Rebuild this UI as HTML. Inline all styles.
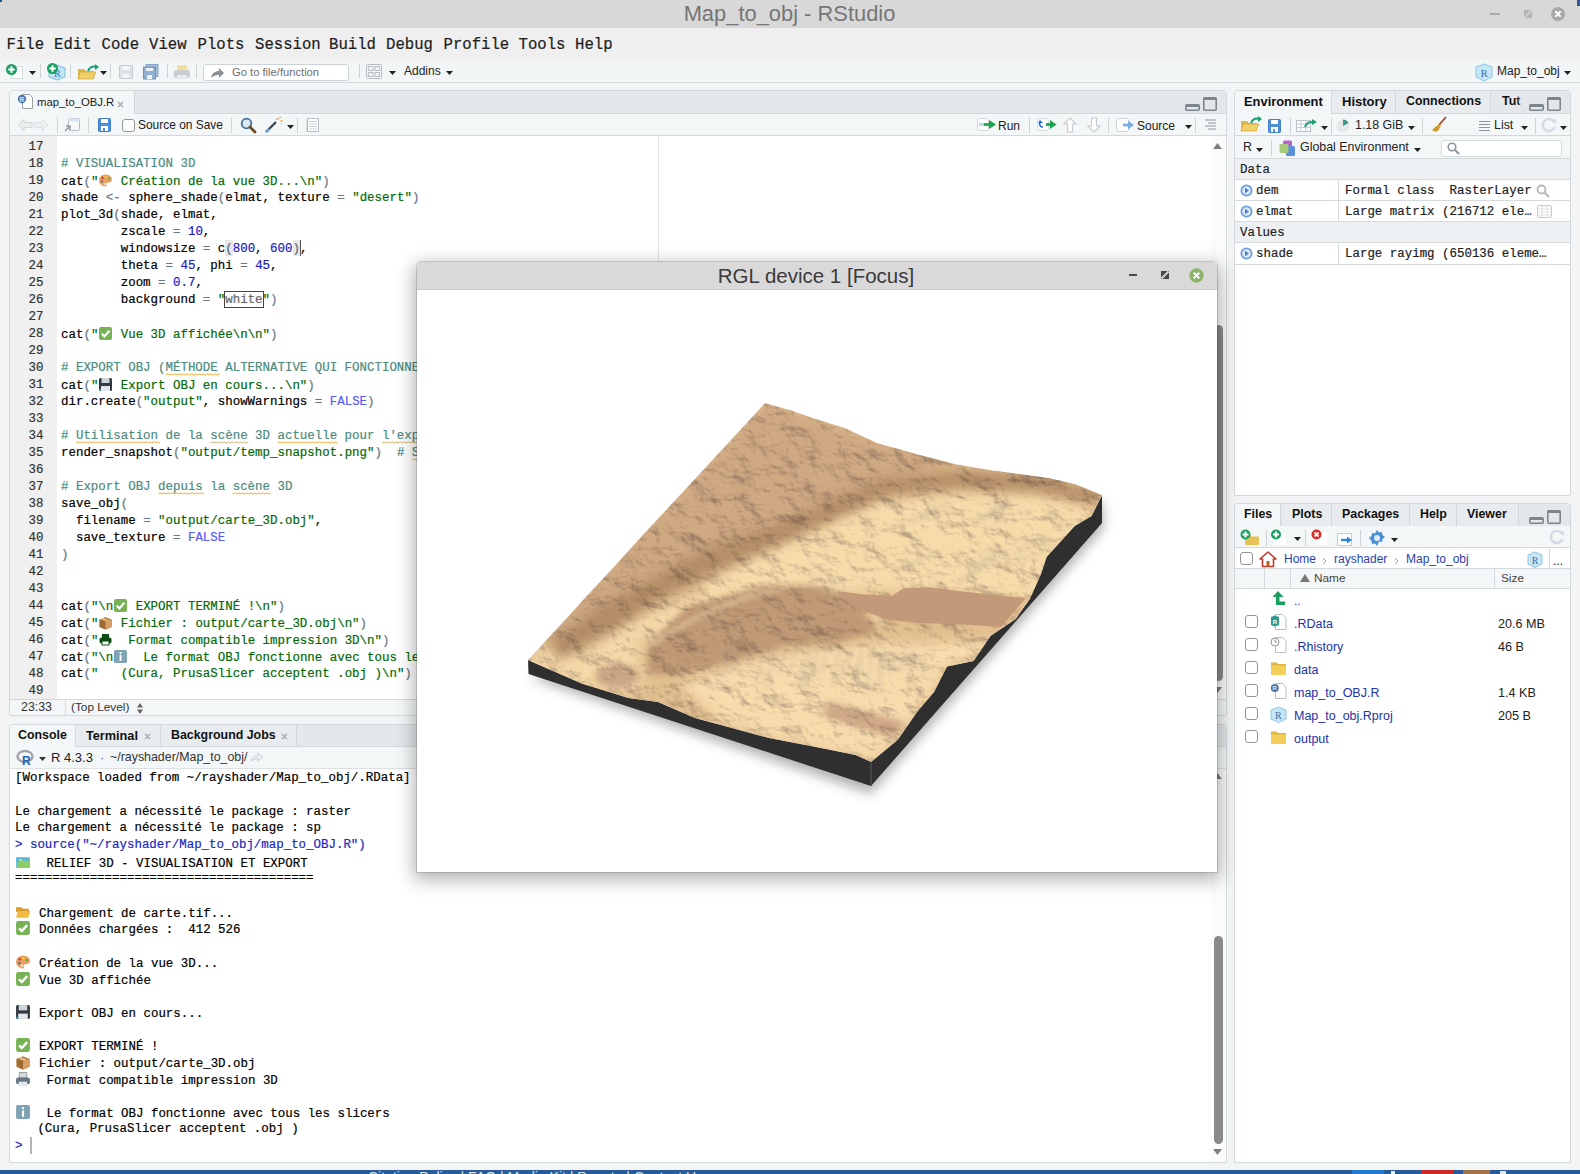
<!DOCTYPE html>
<html><head><meta charset="utf-8">
<style>
*{box-sizing:border-box;margin:0;padding:0}
html,body{width:1580px;height:1174px;overflow:hidden;background:#f2f4f5;font-family:"Liberation Sans",sans-serif;color:#222;position:relative}
.a{position:absolute}
.m{-webkit-text-stroke:0.2px currentColor}
svg.a{overflow:visible}
</style></head><body>
<div class="a" style="left:0px;top:0px;width:1580px;height:28px;background:#d8d8d8;"></div>
<div class="a" style="left:789.5px;top:-1.59px;font-size:21.9px;line-height:31px;font-family:'Liberation Sans',sans-serif;color:#767676;font-weight:normal;white-space:pre;transform:translateX(-50%);">Map_to_obj - RStudio</div>
<div class="a" style="left:1490px;top:13px;width:10px;height:2px;background:#a9a9a9;"></div>
<svg class="a" style="left:1524px;top:10px;" width="8" height="8" viewBox="0 0 8 8"><path d="M0 0h8v8H0z" fill="#b3b3b3"/><path d="M0.5 7.5L7.5 0.5" stroke="#d8d8d8" stroke-width="1.6"/></svg>
<svg class="a" style="left:1551px;top:7px;" width="14" height="14" viewBox="0 0 14 14"><circle cx="7" cy="7" r="7" fill="#a8a8a8"/><path d="M4.3 4.3L9.7 9.7M9.7 4.3L4.3 9.7" stroke="#fff" stroke-width="2"/></svg>
<div class="a" style="left:1577px;top:0px;width:3px;height:6px;background:#2a5a9b;"></div>
<div class="a" style="left:0px;top:0px;width:2px;height:2px;background:#1c4f96;"></div>
<div class="a" style="left:0px;top:28px;width:1580px;height:31px;background:#efefef;"></div>
<div class="a m" style="left:6.5px;top:33.83px;font-size:15.65px;line-height:22px;font-family:'Liberation Mono',monospace;color:#1e1e1e;font-weight:normal;white-space:pre;">File</div>
<div class="a m" style="left:54px;top:33.83px;font-size:15.65px;line-height:22px;font-family:'Liberation Mono',monospace;color:#1e1e1e;font-weight:normal;white-space:pre;">Edit</div>
<div class="a m" style="left:101.5px;top:33.83px;font-size:15.65px;line-height:22px;font-family:'Liberation Mono',monospace;color:#1e1e1e;font-weight:normal;white-space:pre;">Code</div>
<div class="a m" style="left:149px;top:33.83px;font-size:15.65px;line-height:22px;font-family:'Liberation Mono',monospace;color:#1e1e1e;font-weight:normal;white-space:pre;">View</div>
<div class="a m" style="left:197.5px;top:33.83px;font-size:15.65px;line-height:22px;font-family:'Liberation Mono',monospace;color:#1e1e1e;font-weight:normal;white-space:pre;">Plots</div>
<div class="a m" style="left:255px;top:33.83px;font-size:15.65px;line-height:22px;font-family:'Liberation Mono',monospace;color:#1e1e1e;font-weight:normal;white-space:pre;">Session</div>
<div class="a m" style="left:329px;top:33.83px;font-size:15.65px;line-height:22px;font-family:'Liberation Mono',monospace;color:#1e1e1e;font-weight:normal;white-space:pre;">Build</div>
<div class="a m" style="left:386px;top:33.83px;font-size:15.65px;line-height:22px;font-family:'Liberation Mono',monospace;color:#1e1e1e;font-weight:normal;white-space:pre;">Debug</div>
<div class="a m" style="left:443.5px;top:33.83px;font-size:15.65px;line-height:22px;font-family:'Liberation Mono',monospace;color:#1e1e1e;font-weight:normal;white-space:pre;">Profile</div>
<div class="a m" style="left:518.5px;top:33.83px;font-size:15.65px;line-height:22px;font-family:'Liberation Mono',monospace;color:#1e1e1e;font-weight:normal;white-space:pre;">Tools</div>
<div class="a m" style="left:575px;top:33.83px;font-size:15.65px;line-height:22px;font-family:'Liberation Mono',monospace;color:#1e1e1e;font-weight:normal;white-space:pre;">Help</div>
<div class="a" style="left:0px;top:59px;width:1580px;height:24px;background:#f3f6f7;border-bottom:1px solid #d3d8db"></div>
<div class="a" style="left:11px;top:66px;width:12px;height:13px;background:#fff;border:1px solid #d8dcdf"></div>
<svg class="a" style="left:6.0px;top:63.5px;" width="11.0" height="11.0" viewBox="0 0 11.0 11.0"><circle cx="5.5" cy="5.5" r="5.5" fill="#1aa060"/><path d="M5.5 2.2V8.8M2.2 5.5H8.8" stroke="#fff" stroke-width="2"/></svg>
<svg class="a" style="left:29px;top:71px;" width="7" height="4" viewBox="0 0 7 4"><path d="M0 0h7l-3.5 4z" fill="#222"/></svg>
<div class="a" style="left:40px;top:64px;width:1px;height:14px;background:#cfd4d7;"></div>
<svg class="a" style="left:47px;top:62px;" width="20" height="20" viewBox="0 0 20 20"><path d="M10 3l8 3v9l-8 3l-8-3V6z" fill="#bfe3f3" stroke="#7cc0df" stroke-width="1"/><text x="7" y="15" font-family="Liberation Serif" font-size="10" fill="#3a78b8">R</text></svg>
<svg class="a" style="left:46.5px;top:62.5px;" width="11.0" height="11.0" viewBox="0 0 11.0 11.0"><circle cx="5.5" cy="5.5" r="5.5" fill="#1aa060"/><path d="M5.5 2.2V8.8M2.2 5.5H8.8" stroke="#fff" stroke-width="2"/></svg>
<div class="a" style="left:70px;top:64px;width:1px;height:14px;background:#cfd4d7;"></div>
<svg class="a" style="left:77px;top:64px;" width="22" height="16" viewBox="0 0 22 16"><path d="M1 5h6l2 2h8v8H1z" fill="#e0b850"/><path d="M3 8h16l-3 7H1z" fill="#f1cf6a" stroke="#c99a2c" stroke-width=".6"/><path d="M11 7c2-4 5-5 8-4" stroke="#1aa070" stroke-width="2" fill="none"/><path d="M18 0l4 3l-4 3z" fill="#1aa070"/></svg>
<svg class="a" style="left:100px;top:71px;" width="7" height="4" viewBox="0 0 7 4"><path d="M0 0h7l-3.5 4z" fill="#222"/></svg>
<div class="a" style="left:110px;top:64px;width:1px;height:14px;background:#cfd4d7;"></div>
<svg class="a" style="left:119px;top:65px;" width="14" height="14" viewBox="0 0 14 14"><rect x="0.5" y="0.5" width="13" height="13" rx="1" fill="#dfe3e6" stroke="#c5cbd0"/><rect x="3" y="1" width="8" height="4" fill="#f3f6f7"/><rect x="4" y="9" width="6" height="4" fill="#f3f6f7"/></svg>
<svg class="a" style="left:143px;top:64px;" width="16" height="16" viewBox="0 0 16 16"><rect x="3" y="0.5" width="12" height="12" fill="#a7bfd8" stroke="#8aa6c6"/><rect x="0.5" y="3" width="12" height="12" fill="#8fb0d3" stroke="#6f93bd"/><rect x="3" y="4" width="7" height="3" fill="#eef3f8"/><rect x="4" y="11" width="5" height="4" fill="#eef3f8"/></svg>
<div class="a" style="left:167px;top:64px;width:1px;height:14px;background:#cfd4d7;"></div>
<svg class="a" style="left:173px;top:64px;" width="18" height="16" viewBox="0 0 18 16"><rect x="4" y="1" width="10" height="6" fill="#f0dfa0"/><rect x="1" y="6" width="16" height="8" rx="2" fill="#c9ced2"/><rect x="4" y="11" width="10" height="4" fill="#e9ecee"/></svg>
<div class="a" style="left:196px;top:64px;width:1px;height:14px;background:#cfd4d7;"></div>
<div class="a" style="left:203px;top:64px;width:146px;height:17px;background:#fff;border:1px solid #cdd2d6;border-radius:3px"></div>
<svg class="a" style="left:210px;top:66px;" width="14" height="13" viewBox="0 0 14 13"><path d="M1 12c1-5 4-7 8-7V2l5 5l-5 5V9c-3 0-6 1-8 3z" fill="#8c9196"/></svg>
<div class="a" style="left:232px;top:64.12px;font-size:11.2px;line-height:16px;font-family:'Liberation Sans',sans-serif;color:#6e6e6e;font-weight:normal;white-space:pre;">Go to file/function</div>
<div class="a" style="left:359px;top:64px;width:1px;height:14px;background:#cfd4d7;"></div>
<svg class="a" style="left:366px;top:64px;" width="16" height="15" viewBox="0 0 16 15"><rect x="0.5" y="0.5" width="15" height="14" rx="1" fill="none" stroke="#b8bdc1"/><rect x="2.5" y="2.5" width="4.5" height="4" fill="none" stroke="#b8bdc1"/><rect x="9" y="2.5" width="4.5" height="4" fill="none" stroke="#b8bdc1"/><rect x="2.5" y="8.5" width="4.5" height="4" fill="none" stroke="#b8bdc1"/><rect x="9" y="8.5" width="4.5" height="4" fill="none" stroke="#b8bdc1"/></svg>
<svg class="a" style="left:389px;top:71px;" width="7" height="4" viewBox="0 0 7 4"><path d="M0 0h7l-3.5 4z" fill="#222"/></svg>
<div class="a" style="left:404px;top:63.34px;font-size:12px;line-height:17px;font-family:'Liberation Sans',sans-serif;color:#222;font-weight:normal;white-space:pre;">Addins</div>
<svg class="a" style="left:446px;top:71px;" width="7" height="4" viewBox="0 0 7 4"><path d="M0 0h7l-3.5 4z" fill="#222"/></svg>
<svg class="a" style="left:1475px;top:63px;" width="18" height="19" viewBox="0 0 18 19"><path d="M9 1l8 3v10l-8 4l-8-4V4z" fill="#c6e6f5" stroke="#8ac8e6" stroke-width="1"/><text x="5.5" y="14" font-family="Liberation Serif" font-size="11" fill="#3f6fa8">R</text></svg>
<div class="a" style="left:1497px;top:63.34px;font-size:12px;line-height:17px;font-family:'Liberation Sans',sans-serif;color:#222;font-weight:normal;white-space:pre;">Map_to_obj</div>
<svg class="a" style="left:1564px;top:71px;" width="7" height="4" viewBox="0 0 7 4"><path d="M0 0h7l-3.5 4z" fill="#222"/></svg>
<div class="a" style="left:9px;top:90px;width:1218px;height:626px;background:#fff;border:1px solid #d3d8db;border-radius:4px 4px 2px 2px"></div>
<div class="a" style="left:10px;top:91px;width:1216px;height:23px;background:#e5e8ea;border-radius:3px 3px 0 0;border-bottom:1px solid #d3d8db"></div>
<div class="a" style="left:10px;top:91px;width:125px;height:23px;background:#f4f7f8;border-right:1px solid #d3d8db;border-radius:3px 0 0 0"></div>
<svg class="a" style="left:17px;top:93px;" width="17" height="16" viewBox="0 0 17 16"><path d="M5.5 1.5h7l3 3v11h-10z" fill="#fff" stroke="#9aa0a4" stroke-width="1"/><circle cx="5" cy="6" r="4.2" fill="#4d79b0"/><text x="2.6" y="8.7" font-family="Liberation Sans" font-size="6.5" font-weight="bold" fill="#dce6f2">R</text></svg>
<div class="a" style="left:37px;top:94.08px;font-size:11.3px;line-height:16px;font-family:'Liberation Sans',sans-serif;color:#1a1a1a;font-weight:normal;white-space:pre;">map_to_OBJ.R</div>
<svg class="a" style="left:117px;top:101px;" width="7" height="7" viewBox="0 0 7 7"><path d="M1 1l5 5M6 1l-5 5" stroke="#aab0b4" stroke-width="1.6"/></svg>
<svg class="a" style="left:1185px;top:97px;" width="32" height="14" viewBox="0 0 32 14"><rect x="0.8" y="7.8" width="13.4" height="5.4" rx="1" fill="none" stroke="#7d868c" stroke-width="1.6"/><rect x="0.8" y="8" width="13.4" height="2" fill="#7d868c"/><rect x="18.8" y="0.8" width="12.4" height="12.4" rx="1" fill="none" stroke="#7d868c" stroke-width="1.6"/><rect x="18.8" y="0.8" width="12.4" height="2.2" fill="#7d868c"/></svg>
<div class="a" style="left:10px;top:114px;width:1216px;height:22px;background:#f4f7f8;border-bottom:1px solid #d3d8db"></div>
<svg class="a" style="left:17px;top:118px;" width="32" height="14" viewBox="0 0 32 14"><path d="M1 7l6-6v3.5h8v5H7V13z" fill="#eceef0" stroke="#d3d7da" stroke-width="1"/><path d="M31 7l-6-6v3.5h-8v5h8V13z" fill="#eceef0" stroke="#dfe2e4" stroke-width="1"/></svg>
<div class="a" style="left:57px;top:117px;width:1px;height:16px;background:#cfd4d7;"></div>
<svg class="a" style="left:64px;top:118px;" width="17" height="14" viewBox="0 0 17 14"><rect x="4.5" y="0.5" width="11" height="12" rx="2" fill="#f7f9fa" stroke="#b5bcc1"/><rect x="4.5" y="0.5" width="11" height="3" fill="#d7e6f4"/><path d="M1 13l5-5M2 8h4v4" stroke="#8d959b" stroke-width="1.4" fill="none"/></svg>
<div class="a" style="left:88px;top:117px;width:1px;height:16px;background:#cfd4d7;"></div>
<svg class="a" style="left:98px;top:118px;" width="13" height="14" viewBox="0 0 13 14"><rect x="0.5" y="0.5" width="12" height="13" rx="1" fill="#4d8fd8" stroke="#3f7fc8"/><rect x="3" y="1" width="7" height="4" fill="#fff"/><rect x="3" y="8" width="7" height="5" fill="#fff"/><rect x="5" y="10" width="2" height="3" fill="#4d8fd8"/></svg>
<div class="a" style="left:122px;top:119px;width:13px;height:13px;background:#fff;border:1px solid #8f959a;border-radius:3px"></div>
<div class="a" style="left:138px;top:117.36px;font-size:11.95px;line-height:17px;font-family:'Liberation Sans',sans-serif;color:#1a1a1a;font-weight:normal;white-space:pre;">Source on Save</div>
<div class="a" style="left:231px;top:117px;width:1px;height:16px;background:#cfd4d7;"></div>
<svg class="a" style="left:240px;top:117px;" width="17" height="17" viewBox="0 0 17 17"><circle cx="6.5" cy="6.5" r="4.8" fill="#dbe9f6" stroke="#4b6f96" stroke-width="1.8"/><path d="M10 10l5 5" stroke="#6b4a2a" stroke-width="2.8" stroke-linecap="round"/></svg>
<svg class="a" style="left:264px;top:116px;" width="19" height="18" viewBox="0 0 19 18"><path d="M2 16L12 6" stroke="#3a4a5a" stroke-width="2.4"/><path d="M2 16l3-3" stroke="#6aa0d8" stroke-width="2.4"/><path d="M14 1v3M16 5h3M15.5 2.5l2-2M12 3l1 1M17 7l1 1" stroke="#f39a3a" stroke-width="1"/></svg>
<svg class="a" style="left:287px;top:125px;" width="7" height="4" viewBox="0 0 7 4"><path d="M0 0h7l-3.5 4z" fill="#222"/></svg>
<div class="a" style="left:297px;top:117px;width:1px;height:16px;background:#cfd4d7;"></div>
<svg class="a" style="left:306px;top:118px;" width="13" height="14" viewBox="0 0 13 14"><rect x="1.5" y="0.5" width="11" height="13" fill="#fff" stroke="#b9bfc4"/><path d="M3 3.5h8M3 6h8M3 8.5h8M3 11h8" stroke="#c9cfd3" stroke-width="1"/><path d="M1 2v11" stroke="#9aa1a6" stroke-dasharray="1 1"/></svg>
<svg class="a" style="left:977px;top:118px;" width="20" height="14" viewBox="0 0 20 14"><rect x="0.5" y="0.5" width="11" height="12" rx="2" fill="#fff" stroke="#d5d9dc"/><rect x="2" y="5" width="6" height="3" fill="#bcd3ef"/><path d="M7 6.5h6" stroke="#16a34a" stroke-width="2.6"/><path d="M12 2l7 4.5l-7 4.5z" fill="#16a34a"/></svg>
<div class="a" style="left:998px;top:117.84px;font-size:12px;line-height:17px;font-family:'Liberation Sans',sans-serif;color:#1a1a1a;font-weight:normal;white-space:pre;">Run</div>
<div class="a" style="left:1029px;top:117px;width:1px;height:16px;background:#cfd4d7;"></div>
<svg class="a" style="left:1037px;top:118px;" width="20" height="14" viewBox="0 0 20 14"><rect x="0.5" y="0.5" width="11" height="12" rx="2" fill="#fff" stroke="#d5d9dc"/><path d="M6 9c-3 0-4-2-3-5" stroke="#2563eb" stroke-width="1.6" fill="none"/><path d="M1 5l2-3l3 3z" fill="#2563eb"/><path d="M9 6.5h5" stroke="#16a34a" stroke-width="2.6"/><path d="M13 2l6.5 4.5l-6.5 4.5z" fill="#16a34a"/></svg>
<svg class="a" style="left:1063px;top:117px;" width="14" height="16" viewBox="0 0 14 16"><path d="M7 1l6 6H9.5v8h-5V7H1z" fill="#fff" stroke="#c8ccd0" stroke-width="1.2"/></svg>
<svg class="a" style="left:1087px;top:117px;" width="14" height="16" viewBox="0 0 14 16"><path d="M7 15l6-6H9.5V1h-5v8H1z" fill="#fff" stroke="#c8ccd0" stroke-width="1.2"/></svg>
<div class="a" style="left:1108px;top:117px;width:1px;height:16px;background:#cfd4d7;"></div>
<svg class="a" style="left:1116px;top:118px;" width="20" height="14" viewBox="0 0 20 14"><rect x="0.5" y="0.5" width="12" height="13" rx="2" fill="#fff" stroke="#cdd2d6"/><path d="M7 7h6" stroke="#7aaee0" stroke-width="2.8"/><path d="M12 2.5l6 4.5l-6 4.5z" fill="#7aaee0"/></svg>
<div class="a" style="left:1137px;top:117.84px;font-size:12px;line-height:17px;font-family:'Liberation Sans',sans-serif;color:#1a1a1a;font-weight:normal;white-space:pre;">Source</div>
<svg class="a" style="left:1185px;top:125px;" width="7" height="4" viewBox="0 0 7 4"><path d="M0 0h7l-3.5 4z" fill="#222"/></svg>
<div class="a" style="left:1195px;top:117px;width:1px;height:16px;background:#cfd4d7;"></div>
<svg class="a" style="left:1204px;top:119px;" width="13" height="12" viewBox="0 0 13 12"><path d="M1 1h11M4 4h8M1 7h11M4 10h8" stroke="#8d959b" stroke-width="1"/></svg>
<div class="a" style="left:10px;top:136px;width:47px;height:563px;background:#f0f0f0;"></div>
<div class="a" style="left:658px;top:136px;width:1px;height:563px;background:#e3e3e3;"></div>
<div class="a" style="left:1211px;top:136px;width:15px;height:563px;background:#fbfbfb;"></div>
<svg class="a" style="left:1213px;top:143px;" width="9" height="6" viewBox="0 0 9 6"><path d="M0 6h9L4.5 0z" fill="#7e7e7e"/></svg>
<div class="a" style="left:10px;top:699px;width:1216px;height:16px;background:#f4f7f8;border-top:1px solid #d3d8db;border-radius:0 0 2px 2px"></div>
<div class="a" style="left:65px;top:700px;width:1px;height:15px;background:#d3d8db;"></div>
<div class="a" style="left:21px;top:699.20px;font-size:12.4px;line-height:17px;font-family:'Liberation Sans',sans-serif;color:#333;font-weight:normal;white-space:pre;">23:33</div>
<div class="a" style="left:71px;top:699.41px;font-size:11.8px;line-height:17px;font-family:'Liberation Sans',sans-serif;color:#333;font-weight:normal;white-space:pre;">(Top Level)</div>
<svg class="a" style="left:137px;top:703px;" width="6" height="11" viewBox="0 0 6 11"><path d="M0 4.5h6L3 0zM0 6.5h6L3 11z" fill="#666"/></svg>
<div class="a m" style="left:43.5px;top:139.18px;font-size:12.45px;line-height:17px;font-family:'Liberation Mono',monospace;color:#333;font-weight:normal;white-space:pre;transform:translateX(-100%);">17</div>
<div class="a m" style="left:43.5px;top:156.18px;font-size:12.45px;line-height:17px;font-family:'Liberation Mono',monospace;color:#333;font-weight:normal;white-space:pre;transform:translateX(-100%);">18</div>
<div class="a m" style="left:61px;top:156.18px;font-size:12.45px;line-height:17px;font-family:'Liberation Mono',monospace;color:#000;font-weight:normal;white-space:pre;"><span style="color:#4c8b80"># VISUALISATION 3D</span></div>
<div class="a m" style="left:43.5px;top:173.18px;font-size:12.45px;line-height:17px;font-family:'Liberation Mono',monospace;color:#333;font-weight:normal;white-space:pre;transform:translateX(-100%);">19</div>
<div class="a m" style="left:61px;top:173.18px;font-size:12.45px;line-height:17px;font-family:'Liberation Mono',monospace;color:#000;font-weight:normal;white-space:pre;"><span style="color:#000">cat</span><span style="color:#687687">(</span><span style="color:#036a07">&quot;<span style="display:inline-block;width:14.94px"><svg width="15" height="15" viewBox="0 0 15 15" style="display:inline-block;vertical-align:-3px"><path d="M7.5 1.5C3.5 1.5 1 4.3 1 7.6c0 3.6 3 5.9 6.2 5.9c1.6 0 1.7-1.2 1.1-2c-.6-.9 0-2 1.2-1.9c2.2.2 4.5-.5 4.5-3.2C14 3.7 11 1.5 7.5 1.5z" fill="#e9a05b"/><circle cx="4.5" cy="5" r="1.2" fill="#d23b3b"/><circle cx="7.8" cy="3.9" r="1.1" fill="#f2d13c"/><circle cx="11" cy="5.6" r="1.1" fill="#5aa84a"/><circle cx="4" cy="8.6" r="1.1" fill="#3a6fc4"/><circle cx="6.5" cy="11" r="1.1" fill="#f6efe6"/></svg></span> Création de la vue 3D...\n&quot;</span><span style="color:#687687">)</span></div>
<div class="a m" style="left:43.5px;top:190.18px;font-size:12.45px;line-height:17px;font-family:'Liberation Mono',monospace;color:#333;font-weight:normal;white-space:pre;transform:translateX(-100%);">20</div>
<div class="a m" style="left:61px;top:190.18px;font-size:12.45px;line-height:17px;font-family:'Liberation Mono',monospace;color:#000;font-weight:normal;white-space:pre;"><span style="color:#000">shade</span><span style="color:#000"> </span><span style="color:#687687">&lt;-</span><span style="color:#000"> </span><span style="color:#000">sphere_shade</span><span style="color:#687687">(</span><span style="color:#000">elmat</span><span style="color:#000">,</span><span style="color:#000"> </span><span style="color:#000">texture</span><span style="color:#000"> </span><span style="color:#687687">=</span><span style="color:#000"> </span><span style="color:#036a07">&quot;desert&quot;</span><span style="color:#687687">)</span></div>
<div class="a m" style="left:43.5px;top:207.18px;font-size:12.45px;line-height:17px;font-family:'Liberation Mono',monospace;color:#333;font-weight:normal;white-space:pre;transform:translateX(-100%);">21</div>
<div class="a m" style="left:61px;top:207.18px;font-size:12.45px;line-height:17px;font-family:'Liberation Mono',monospace;color:#000;font-weight:normal;white-space:pre;"><span style="color:#000">plot_3d</span><span style="color:#687687">(</span><span style="color:#000">shade</span><span style="color:#000">,</span><span style="color:#000"> </span><span style="color:#000">elmat</span><span style="color:#000">,</span></div>
<div class="a m" style="left:43.5px;top:224.18px;font-size:12.45px;line-height:17px;font-family:'Liberation Mono',monospace;color:#333;font-weight:normal;white-space:pre;transform:translateX(-100%);">22</div>
<div class="a m" style="left:61px;top:224.18px;font-size:12.45px;line-height:17px;font-family:'Liberation Mono',monospace;color:#000;font-weight:normal;white-space:pre;"><span style="color:#000">        </span><span style="color:#000">zscale</span><span style="color:#000"> </span><span style="color:#687687">=</span><span style="color:#000"> </span><span style="color:#1c19c9">10</span><span style="color:#000">,</span></div>
<div class="a m" style="left:43.5px;top:241.18px;font-size:12.45px;line-height:17px;font-family:'Liberation Mono',monospace;color:#333;font-weight:normal;white-space:pre;transform:translateX(-100%);">23</div>
<div class="a m" style="left:61px;top:241.18px;font-size:12.45px;line-height:17px;font-family:'Liberation Mono',monospace;color:#000;font-weight:normal;white-space:pre;"><span style="color:#000">        </span><span style="color:#000">windowsize</span><span style="color:#000"> </span><span style="color:#687687">=</span><span style="color:#000"> </span><span style="color:#000">c</span><span style="color:#687687">(</span><span style="color:#1c19c9">800</span><span style="color:#000">,</span><span style="color:#000"> </span><span style="color:#1c19c9">600</span><span style="color:#687687">)</span><span style="color:#000">,</span></div>
<div class="a m" style="left:43.5px;top:258.18px;font-size:12.45px;line-height:17px;font-family:'Liberation Mono',monospace;color:#333;font-weight:normal;white-space:pre;transform:translateX(-100%);">24</div>
<div class="a m" style="left:61px;top:258.18px;font-size:12.45px;line-height:17px;font-family:'Liberation Mono',monospace;color:#000;font-weight:normal;white-space:pre;"><span style="color:#000">        </span><span style="color:#000">theta</span><span style="color:#000"> </span><span style="color:#687687">=</span><span style="color:#000"> </span><span style="color:#1c19c9">45</span><span style="color:#000">,</span><span style="color:#000"> </span><span style="color:#000">phi</span><span style="color:#000"> </span><span style="color:#687687">=</span><span style="color:#000"> </span><span style="color:#1c19c9">45</span><span style="color:#000">,</span></div>
<div class="a m" style="left:43.5px;top:275.18px;font-size:12.45px;line-height:17px;font-family:'Liberation Mono',monospace;color:#333;font-weight:normal;white-space:pre;transform:translateX(-100%);">25</div>
<div class="a m" style="left:61px;top:275.18px;font-size:12.45px;line-height:17px;font-family:'Liberation Mono',monospace;color:#000;font-weight:normal;white-space:pre;"><span style="color:#000">        </span><span style="color:#000">zoom</span><span style="color:#000"> </span><span style="color:#687687">=</span><span style="color:#000"> </span><span style="color:#1c19c9">0.7</span><span style="color:#000">,</span></div>
<div class="a m" style="left:43.5px;top:292.18px;font-size:12.45px;line-height:17px;font-family:'Liberation Mono',monospace;color:#333;font-weight:normal;white-space:pre;transform:translateX(-100%);">26</div>
<div class="a m" style="left:61px;top:292.18px;font-size:12.45px;line-height:17px;font-family:'Liberation Mono',monospace;color:#000;font-weight:normal;white-space:pre;"><span style="color:#000">        </span><span style="color:#000">background</span><span style="color:#000"> </span><span style="color:#687687">=</span><span style="color:#000"> </span><span style="color:#036a07">&quot;<span style="color:#666">white</span>&quot;</span><span style="color:#687687">)</span></div>
<div class="a m" style="left:43.5px;top:309.18px;font-size:12.45px;line-height:17px;font-family:'Liberation Mono',monospace;color:#333;font-weight:normal;white-space:pre;transform:translateX(-100%);">27</div>
<div class="a m" style="left:43.5px;top:326.18px;font-size:12.45px;line-height:17px;font-family:'Liberation Mono',monospace;color:#333;font-weight:normal;white-space:pre;transform:translateX(-100%);">28</div>
<div class="a m" style="left:61px;top:326.18px;font-size:12.45px;line-height:17px;font-family:'Liberation Mono',monospace;color:#000;font-weight:normal;white-space:pre;"><span style="color:#000">cat</span><span style="color:#687687">(</span><span style="color:#036a07">&quot;<span style="display:inline-block;width:14.94px"><svg width="15" height="15" viewBox="0 0 15 15" style="display:inline-block;vertical-align:-3px"><rect x="1" y="1" width="13" height="13" rx="2" fill="#77b255"/><path d="M3.8 7.8l2.6 2.6l5-5.6" stroke="#fff" stroke-width="2.2" fill="none"/></svg></span> Vue 3D affichée\n\n&quot;</span><span style="color:#687687">)</span></div>
<div class="a m" style="left:43.5px;top:343.18px;font-size:12.45px;line-height:17px;font-family:'Liberation Mono',monospace;color:#333;font-weight:normal;white-space:pre;transform:translateX(-100%);">29</div>
<div class="a m" style="left:43.5px;top:360.18px;font-size:12.45px;line-height:17px;font-family:'Liberation Mono',monospace;color:#333;font-weight:normal;white-space:pre;transform:translateX(-100%);">30</div>
<div class="a m" style="left:61px;top:360.18px;font-size:12.45px;line-height:17px;font-family:'Liberation Mono',monospace;color:#000;font-weight:normal;white-space:pre;"><span style="color:#4c8b80"># EXPORT OBJ (MÉTHODE ALTERNATIVE QUI FONCTIONNE)</span></div>
<div class="a m" style="left:43.5px;top:377.18px;font-size:12.45px;line-height:17px;font-family:'Liberation Mono',monospace;color:#333;font-weight:normal;white-space:pre;transform:translateX(-100%);">31</div>
<div class="a m" style="left:61px;top:377.18px;font-size:12.45px;line-height:17px;font-family:'Liberation Mono',monospace;color:#000;font-weight:normal;white-space:pre;"><span style="color:#000">cat</span><span style="color:#687687">(</span><span style="color:#036a07">&quot;<span style="display:inline-block;width:14.94px"><svg width="15" height="15" viewBox="0 0 15 15" style="display:inline-block;vertical-align:-3px"><rect x="1" y="1" width="13" height="13" rx="1.5" fill="#31373d"/><rect x="3.5" y="1" width="8" height="5" fill="#ccd6dd"/><rect x="3" y="9" width="9" height="5" fill="#e1e8ed"/><rect x="1" y="12" width="2" height="2" fill="#3b88c3"/></svg></span> Export OBJ en cours...\n&quot;</span><span style="color:#687687">)</span></div>
<div class="a m" style="left:43.5px;top:394.18px;font-size:12.45px;line-height:17px;font-family:'Liberation Mono',monospace;color:#333;font-weight:normal;white-space:pre;transform:translateX(-100%);">32</div>
<div class="a m" style="left:61px;top:394.18px;font-size:12.45px;line-height:17px;font-family:'Liberation Mono',monospace;color:#000;font-weight:normal;white-space:pre;"><span style="color:#000">dir.create</span><span style="color:#687687">(</span><span style="color:#036a07">&quot;output&quot;</span><span style="color:#000">,</span><span style="color:#000"> </span><span style="color:#000">showWarnings</span><span style="color:#000"> </span><span style="color:#687687">=</span><span style="color:#000"> </span><span style="color:#585cf6">FALSE</span><span style="color:#687687">)</span></div>
<div class="a m" style="left:43.5px;top:411.18px;font-size:12.45px;line-height:17px;font-family:'Liberation Mono',monospace;color:#333;font-weight:normal;white-space:pre;transform:translateX(-100%);">33</div>
<div class="a m" style="left:43.5px;top:428.18px;font-size:12.45px;line-height:17px;font-family:'Liberation Mono',monospace;color:#333;font-weight:normal;white-space:pre;transform:translateX(-100%);">34</div>
<div class="a m" style="left:61px;top:428.18px;font-size:12.45px;line-height:17px;font-family:'Liberation Mono',monospace;color:#000;font-weight:normal;white-space:pre;"><span style="color:#4c8b80"># Utilisation de la scène 3D actuelle pour l&#x27;export</span></div>
<div class="a m" style="left:43.5px;top:445.18px;font-size:12.45px;line-height:17px;font-family:'Liberation Mono',monospace;color:#333;font-weight:normal;white-space:pre;transform:translateX(-100%);">35</div>
<div class="a m" style="left:61px;top:445.18px;font-size:12.45px;line-height:17px;font-family:'Liberation Mono',monospace;color:#000;font-weight:normal;white-space:pre;"><span style="color:#000">render_snapshot</span><span style="color:#687687">(</span><span style="color:#036a07">&quot;output/temp_snapshot.png&quot;</span><span style="color:#687687">)</span><span style="color:#000">  </span><span style="color:#4c8b80"># Snapshot</span></div>
<div class="a m" style="left:43.5px;top:462.18px;font-size:12.45px;line-height:17px;font-family:'Liberation Mono',monospace;color:#333;font-weight:normal;white-space:pre;transform:translateX(-100%);">36</div>
<div class="a m" style="left:43.5px;top:479.18px;font-size:12.45px;line-height:17px;font-family:'Liberation Mono',monospace;color:#333;font-weight:normal;white-space:pre;transform:translateX(-100%);">37</div>
<div class="a m" style="left:61px;top:479.18px;font-size:12.45px;line-height:17px;font-family:'Liberation Mono',monospace;color:#000;font-weight:normal;white-space:pre;"><span style="color:#4c8b80"># Export OBJ depuis la scène 3D</span></div>
<div class="a m" style="left:43.5px;top:496.18px;font-size:12.45px;line-height:17px;font-family:'Liberation Mono',monospace;color:#333;font-weight:normal;white-space:pre;transform:translateX(-100%);">38</div>
<div class="a m" style="left:61px;top:496.18px;font-size:12.45px;line-height:17px;font-family:'Liberation Mono',monospace;color:#000;font-weight:normal;white-space:pre;"><span style="color:#000">save_obj</span><span style="color:#687687">(</span></div>
<div class="a m" style="left:43.5px;top:513.18px;font-size:12.45px;line-height:17px;font-family:'Liberation Mono',monospace;color:#333;font-weight:normal;white-space:pre;transform:translateX(-100%);">39</div>
<div class="a m" style="left:61px;top:513.18px;font-size:12.45px;line-height:17px;font-family:'Liberation Mono',monospace;color:#000;font-weight:normal;white-space:pre;"><span style="color:#000">  </span><span style="color:#000">filename</span><span style="color:#000"> </span><span style="color:#687687">=</span><span style="color:#000"> </span><span style="color:#036a07">&quot;output/carte_3D.obj&quot;</span><span style="color:#000">,</span></div>
<div class="a m" style="left:43.5px;top:530.18px;font-size:12.45px;line-height:17px;font-family:'Liberation Mono',monospace;color:#333;font-weight:normal;white-space:pre;transform:translateX(-100%);">40</div>
<div class="a m" style="left:61px;top:530.18px;font-size:12.45px;line-height:17px;font-family:'Liberation Mono',monospace;color:#000;font-weight:normal;white-space:pre;"><span style="color:#000">  </span><span style="color:#000">save_texture</span><span style="color:#000"> </span><span style="color:#687687">=</span><span style="color:#000"> </span><span style="color:#585cf6">FALSE</span></div>
<div class="a m" style="left:43.5px;top:547.18px;font-size:12.45px;line-height:17px;font-family:'Liberation Mono',monospace;color:#333;font-weight:normal;white-space:pre;transform:translateX(-100%);">41</div>
<div class="a m" style="left:61px;top:547.18px;font-size:12.45px;line-height:17px;font-family:'Liberation Mono',monospace;color:#000;font-weight:normal;white-space:pre;"><span style="color:#687687">)</span></div>
<div class="a m" style="left:43.5px;top:564.18px;font-size:12.45px;line-height:17px;font-family:'Liberation Mono',monospace;color:#333;font-weight:normal;white-space:pre;transform:translateX(-100%);">42</div>
<div class="a m" style="left:43.5px;top:581.18px;font-size:12.45px;line-height:17px;font-family:'Liberation Mono',monospace;color:#333;font-weight:normal;white-space:pre;transform:translateX(-100%);">43</div>
<div class="a m" style="left:43.5px;top:598.18px;font-size:12.45px;line-height:17px;font-family:'Liberation Mono',monospace;color:#333;font-weight:normal;white-space:pre;transform:translateX(-100%);">44</div>
<div class="a m" style="left:61px;top:598.18px;font-size:12.45px;line-height:17px;font-family:'Liberation Mono',monospace;color:#000;font-weight:normal;white-space:pre;"><span style="color:#000">cat</span><span style="color:#687687">(</span><span style="color:#036a07">&quot;\n<span style="display:inline-block;width:14.94px"><svg width="15" height="15" viewBox="0 0 15 15" style="display:inline-block;vertical-align:-3px"><rect x="1" y="1" width="13" height="13" rx="2" fill="#77b255"/><path d="M3.8 7.8l2.6 2.6l5-5.6" stroke="#fff" stroke-width="2.2" fill="none"/></svg></span> EXPORT TERMINÉ !\n&quot;</span><span style="color:#687687">)</span></div>
<div class="a m" style="left:43.5px;top:615.18px;font-size:12.45px;line-height:17px;font-family:'Liberation Mono',monospace;color:#333;font-weight:normal;white-space:pre;transform:translateX(-100%);">45</div>
<div class="a m" style="left:61px;top:615.18px;font-size:12.45px;line-height:17px;font-family:'Liberation Mono',monospace;color:#000;font-weight:normal;white-space:pre;"><span style="color:#000">cat</span><span style="color:#687687">(</span><span style="color:#036a07">&quot;<span style="display:inline-block;width:14.94px"><svg width="15" height="15" viewBox="0 0 15 15" style="display:inline-block;vertical-align:-3px"><path d="M1.5 4.5L7.5 2l6 2.5v7.5l-6 2.5l-6-2.5z" fill="#c1884a"/><path d="M1.5 4.5l6 2.5l6-2.5v7.5l-6 2.5l-6-2.5z" fill="#a06a35"/><path d="M7.5 7v7.5l6-2.5V4.5z" fill="#d9a066"/><path d="M4 3.4l6 2.6" stroke="#f0d0a0" stroke-width="1.2"/></svg></span> Fichier : output/carte_3D.obj\n&quot;</span><span style="color:#687687">)</span></div>
<div class="a m" style="left:43.5px;top:632.18px;font-size:12.45px;line-height:17px;font-family:'Liberation Mono',monospace;color:#333;font-weight:normal;white-space:pre;transform:translateX(-100%);">46</div>
<div class="a m" style="left:61px;top:632.18px;font-size:12.45px;line-height:17px;font-family:'Liberation Mono',monospace;color:#000;font-weight:normal;white-space:pre;"><span style="color:#000">cat</span><span style="color:#687687">(</span><span style="color:#036a07">&quot;<span style="display:inline-block;width:14.94px"><svg width="15" height="15" viewBox="0 0 15 15" style="display:inline-block;vertical-align:-3px"><rect x="4" y="2" width="7" height="4" fill="#0d4d14"/><rect x="1.5" y="5.5" width="12" height="6" rx="2" fill="#0d4d14"/><rect x="4" y="9" width="7" height="4" fill="#fff" stroke="#0d4d14"/></svg></span>  Format compatible impression 3D\n&quot;</span><span style="color:#687687">)</span></div>
<div class="a m" style="left:43.5px;top:649.18px;font-size:12.45px;line-height:17px;font-family:'Liberation Mono',monospace;color:#333;font-weight:normal;white-space:pre;transform:translateX(-100%);">47</div>
<div class="a m" style="left:61px;top:649.18px;font-size:12.45px;line-height:17px;font-family:'Liberation Mono',monospace;color:#000;font-weight:normal;white-space:pre;"><span style="color:#000">cat</span><span style="color:#687687">(</span><span style="color:#036a07">&quot;\n<span style="display:inline-block;width:14.94px"><svg width="15" height="15" viewBox="0 0 15 15" style="display:inline-block;vertical-align:-3px"><rect x="1" y="1" width="13" height="13" rx="1.5" fill="#7fa3b5"/><rect x="6.6" y="3" width="1.9" height="1.9" fill="#fff"/><rect x="6.6" y="6" width="1.9" height="6" fill="#fff"/></svg></span>  Le format OBJ fonctionne avec tous les slicers\n&quot;</span><span style="color:#687687">)</span></div>
<div class="a m" style="left:43.5px;top:666.18px;font-size:12.45px;line-height:17px;font-family:'Liberation Mono',monospace;color:#333;font-weight:normal;white-space:pre;transform:translateX(-100%);">48</div>
<div class="a m" style="left:61px;top:666.18px;font-size:12.45px;line-height:17px;font-family:'Liberation Mono',monospace;color:#000;font-weight:normal;white-space:pre;"><span style="color:#000">cat</span><span style="color:#687687">(</span><span style="color:#036a07">&quot;   (Cura, PrusaSlicer acceptent .obj )\n&quot;</span><span style="color:#687687">)</span></div>
<div class="a m" style="left:43.5px;top:683.18px;font-size:12.45px;line-height:17px;font-family:'Liberation Mono',monospace;color:#333;font-weight:normal;white-space:pre;transform:translateX(-100%);">49</div>
<div class="a" style="left:225.34px;top:240px;width:7.47px;height:16px;background:rgba(0,0,0,0.09);"></div>
<div class="a" style="left:292.57px;top:240px;width:7.47px;height:16px;background:rgba(0,0,0,0.09);"></div>
<div class="a" style="left:299.53999999999996px;top:240px;width:1.2px;height:16px;background:#555;"></div>
<div class="a" style="left:224.34px;top:291px;width:39.35px;height:17px;background:none;border:1px solid #444"></div>
<svg class="a" style="left:0;top:0" width="1" height="1"><path d="M165.6 375.0 L167.6 373.8 L169.6 375.0 L171.6 373.8 L173.6 375.0 L175.6 373.8 L177.6 375.0 L179.6 373.8 L181.6 375.0 L183.6 373.8 L185.6 375.0 L187.6 373.8 L189.6 375.0 L191.6 373.8 L193.6 375.0 L195.6 373.8 L197.6 375.0 L199.6 373.8 L201.6 375.0 L203.6 373.8 L205.6 375.0 L207.6 373.8 L209.6 375.0 L211.6 373.8 L213.6 375.0 L215.6 373.8 L217.6 375.0 L219.6 373.8" stroke="#e3a23a" stroke-width="0.9" fill="none"/></svg>
<svg class="a" style="left:0;top:0" width="1" height="1"><path d="M75.9 443.0 L77.9 441.8 L79.9 443.0 L81.9 441.8 L83.9 443.0 L85.9 441.8 L87.9 443.0 L89.9 441.8 L91.9 443.0 L93.9 441.8 L95.9 443.0 L97.9 441.8 L99.9 443.0 L101.9 441.8 L103.9 443.0 L105.9 441.8 L107.9 443.0 L109.9 441.8 L111.9 443.0 L113.9 441.8 L115.9 443.0 L117.9 441.8 L119.9 443.0 L121.9 441.8 L123.9 443.0 L125.9 441.8 L127.9 443.0 L129.9 441.8 L131.9 443.0 L133.9 441.8 L135.9 443.0 L137.9 441.8 L139.9 443.0 L141.9 441.8 L143.9 443.0 L145.9 441.8 L147.9 443.0 L149.9 441.8 L151.9 443.0 L153.9 441.8 L155.9 443.0 L157.9 441.8 L159.9 443.0" stroke="#e3a23a" stroke-width="0.9" fill="none"/></svg>
<svg class="a" style="left:0;top:0" width="1" height="1"><path d="M210.4 443.0 L212.4 441.8 L214.4 443.0 L216.4 441.8 L218.4 443.0 L220.4 441.8 L222.4 443.0 L224.4 441.8 L226.4 443.0 L228.4 441.8 L230.4 443.0 L232.4 441.8 L234.4 443.0 L236.4 441.8 L238.4 443.0 L240.4 441.8 L242.4 443.0 L244.4 441.8 L246.4 443.0 L248.4 441.8" stroke="#e3a23a" stroke-width="0.9" fill="none"/></svg>
<svg class="a" style="left:0;top:0" width="1" height="1"><path d="M277.6 443.0 L279.6 441.8 L281.6 443.0 L283.6 441.8 L285.6 443.0 L287.6 441.8 L289.6 443.0 L291.6 441.8 L293.6 443.0 L295.6 441.8 L297.6 443.0 L299.6 441.8 L301.6 443.0 L303.6 441.8 L305.6 443.0 L307.6 441.8 L309.6 443.0 L311.6 441.8 L313.6 443.0 L315.6 441.8 L317.6 443.0 L319.6 441.8 L321.6 443.0 L323.6 441.8 L325.6 443.0 L327.6 441.8 L329.6 443.0 L331.6 441.8 L333.6 443.0 L335.6 441.8 L337.6 443.0" stroke="#e3a23a" stroke-width="0.9" fill="none"/></svg>
<svg class="a" style="left:0;top:0" width="1" height="1"><path d="M382.2 443.0 L384.2 441.8 L386.2 443.0 L388.2 441.8 L390.2 443.0 L392.2 441.8 L394.2 443.0 L396.2 441.8 L398.2 443.0 L400.2 441.8 L402.2 443.0 L404.2 441.8 L406.2 443.0 L408.2 441.8 L410.2 443.0 L412.2 441.8 L414.2 443.0 L416.2 441.8 L418.2 443.0 L420.2 441.8 L422.2 443.0 L424.2 441.8 L426.2 443.0 L428.2 441.8 L430.2 443.0 L432.2 441.8 L434.2 443.0 L436.2 441.8 L438.2 443.0 L440.2 441.8 L442.2 443.0" stroke="#e3a23a" stroke-width="0.9" fill="none"/></svg>
<svg class="a" style="left:0;top:0" width="1" height="1"><path d="M412.1 460.0 L414.1 458.8 L416.1 460.0 L418.1 458.8 L420.1 460.0" stroke="#e3a23a" stroke-width="0.9" fill="none"/></svg>
<svg class="a" style="left:0;top:0" width="1" height="1"><path d="M158.1 494.0 L160.1 492.8 L162.1 494.0 L164.1 492.8 L166.1 494.0 L168.1 492.8 L170.1 494.0 L172.1 492.8 L174.1 494.0 L176.1 492.8 L178.1 494.0 L180.1 492.8 L182.1 494.0 L184.1 492.8 L186.1 494.0 L188.1 492.8 L190.1 494.0 L192.1 492.8 L194.1 494.0 L196.1 492.8 L198.1 494.0 L200.1 492.8 L202.1 494.0 L204.1 492.8" stroke="#e3a23a" stroke-width="0.9" fill="none"/></svg>
<svg class="a" style="left:0;top:0" width="1" height="1"><path d="M232.8 494.0 L234.8 492.8 L236.8 494.0 L238.8 492.8 L240.8 494.0 L242.8 492.8 L244.8 494.0 L246.8 492.8 L248.8 494.0 L250.8 492.8 L252.8 494.0 L254.8 492.8 L256.8 494.0 L258.8 492.8 L260.8 494.0 L262.8 492.8 L264.8 494.0 L266.8 492.8 L268.8 494.0 L270.8 492.8" stroke="#e3a23a" stroke-width="0.9" fill="none"/></svg>
<div class="a" style="left:9px;top:724px;width:1218px;height:439px;background:#fff;border:1px solid #d3d8db;border-radius:4px 4px 2px 2px"></div>
<div class="a" style="left:10px;top:725px;width:1216px;height:22px;background:#e5e8ea;border-radius:3px 3px 0 0;border-bottom:1px solid #d3d8db"></div>
<div class="a" style="left:10px;top:725px;width:66px;height:22px;background:#f4f7f8;border-right:1px solid #d3d8db;border-radius:3px 0 0 0"></div>
<div class="a" style="left:76px;top:725px;width:85px;height:21px;background:#e9ecee;border-right:1px solid #d3d8db"></div>
<div class="a" style="left:161px;top:725px;width:136px;height:21px;background:#e9ecee;border-right:1px solid #d3d8db"></div>
<div class="a" style="left:18px;top:727.20px;font-size:12.4px;line-height:17px;font-family:'Liberation Sans',sans-serif;color:#111;font-weight:bold;white-space:pre;">Console</div>
<div class="a" style="left:86px;top:726.60px;font-size:12.7px;line-height:18px;font-family:'Liberation Sans',sans-serif;color:#111;font-weight:bold;white-space:pre;">Terminal</div>
<svg class="a" style="left:144px;top:733px;" width="7" height="7" viewBox="0 0 7 7"><path d="M1 1l5 5M6 1l-5 5" stroke="#aab0b4" stroke-width="1.6"/></svg>
<div class="a" style="left:171px;top:727.20px;font-size:12.4px;line-height:17px;font-family:'Liberation Sans',sans-serif;color:#111;font-weight:bold;white-space:pre;">Background Jobs</div>
<svg class="a" style="left:281px;top:733px;" width="7" height="7" viewBox="0 0 7 7"><path d="M1 1l5 5M6 1l-5 5" stroke="#aab0b4" stroke-width="1.6"/></svg>
<div class="a" style="left:10px;top:747px;width:1216px;height:22px;background:#f4f7f8;border-bottom:1px solid #dde1e4"></div>
<svg class="a" style="left:17px;top:750px;" width="17" height="15" viewBox="0 0 17 15"><ellipse cx="8" cy="6.5" rx="7.5" ry="5.5" fill="none" stroke="#a0a4a8" stroke-width="2.4"/><text x="5" y="14.5" font-family="Liberation Sans" font-size="12" font-weight="bold" fill="#2165b8">R</text></svg>
<svg class="a" style="left:39px;top:757px;" width="7" height="4" viewBox="0 0 7 4"><path d="M0 0h7l-3.5 4z" fill="#333"/></svg>
<div class="a" style="left:51px;top:748.50px;font-size:13px;line-height:18px;font-family:'Liberation Sans',sans-serif;color:#222;font-weight:normal;white-space:pre;">R 4.3.3</div>
<div class="a" style="left:100px;top:748.63px;font-size:12.6px;line-height:18px;font-family:'Liberation Sans',sans-serif;color:#555;font-weight:normal;white-space:pre;">·</div>
<div class="a" style="left:110px;top:749.20px;font-size:12.4px;line-height:17px;font-family:'Liberation Sans',sans-serif;color:#333;font-weight:normal;white-space:pre;">~/rayshader/Map_to_obj/</div>
<svg class="a" style="left:250px;top:752px;" width="13" height="10" viewBox="0 0 13 10"><path d="M1 9c1-4 4-5 7-5V1l4.5 4L8 9V6.5c-3 0-5 1-7 2.5z" fill="none" stroke="#c4c9cd" stroke-width="1"/></svg>
<div class="a m" style="left:15px;top:770.18px;font-size:12.45px;line-height:17px;font-family:'Liberation Mono',monospace;color:#000;font-weight:normal;white-space:pre;">[Workspace loaded from ~/rayshader/Map_to_obj/.RData]</div>
<div class="a m" style="left:15px;top:803.58px;font-size:12.45px;line-height:17px;font-family:'Liberation Mono',monospace;color:#000;font-weight:normal;white-space:pre;">Le chargement a nécessité le package : raster</div>
<div class="a m" style="left:15px;top:820.28px;font-size:12.45px;line-height:17px;font-family:'Liberation Mono',monospace;color:#000;font-weight:normal;white-space:pre;">Le chargement a nécessité le package : sp</div>
<div class="a m" style="left:15px;top:836.98px;font-size:12.45px;line-height:17px;font-family:'Liberation Mono',monospace;color:#1b26c4;font-weight:normal;white-space:pre;">&gt; source(&quot;~/rayshader/Map_to_obj/map_to_OBJ.R&quot;)</div>
<div class="a m" style="left:15px;top:853.68px;font-size:12.45px;line-height:17px;font-family:'Liberation Mono',monospace;color:#000;font-weight:normal;white-space:pre;"><span style="display:inline-block;width:16.5px"><svg width="16" height="16" viewBox="0 0 15 15" style="display:inline-block;vertical-align:-3px"><rect x="1" y="3" width="13" height="10" fill="#5fb8d8"/><path d="M2 9c2-3 3-5 5-4s2 3 4 2s2-2 3-1v7H2z" fill="#8ccf6a"/><path d="M4 5l2 1" stroke="#fff" stroke-width=".8"/></svg></span>  RELIEF 3D - VISUALISATION ET EXPORT</div>
<div class="a m" style="left:15px;top:870.38px;font-size:12.45px;line-height:17px;font-family:'Liberation Mono',monospace;color:#000;font-weight:normal;white-space:pre;">========================================</div>
<div class="a m" style="left:15px;top:903.78px;font-size:12.45px;line-height:17px;font-family:'Liberation Mono',monospace;color:#000;font-weight:normal;white-space:pre;"><span style="display:inline-block;width:16.5px"><svg width="16" height="16" viewBox="0 0 15 15" style="display:inline-block;vertical-align:-3px"><path d="M1 3h5l1.5 1.5H13v3H1z" fill="#d79b2c"/><path d="M2.5 6.5h12l-2 6.5H1z" fill="#f2bc44"/></svg></span> Chargement de carte.tif...</div>
<div class="a m" style="left:15px;top:920.48px;font-size:12.45px;line-height:17px;font-family:'Liberation Mono',monospace;color:#000;font-weight:normal;white-space:pre;"><span style="display:inline-block;width:16.5px"><svg width="16" height="16" viewBox="0 0 15 15" style="display:inline-block;vertical-align:-3px"><rect x="1" y="1" width="13" height="13" rx="2" fill="#77b255"/><path d="M3.8 7.8l2.6 2.6l5-5.6" stroke="#fff" stroke-width="2.2" fill="none"/></svg></span> Données chargées :  412 526</div>
<div class="a m" style="left:15px;top:953.88px;font-size:12.45px;line-height:17px;font-family:'Liberation Mono',monospace;color:#000;font-weight:normal;white-space:pre;"><span style="display:inline-block;width:16.5px"><svg width="16" height="16" viewBox="0 0 15 15" style="display:inline-block;vertical-align:-3px"><path d="M7.5 1.5C3.5 1.5 1 4.3 1 7.6c0 3.6 3 5.9 6.2 5.9c1.6 0 1.7-1.2 1.1-2c-.6-.9 0-2 1.2-1.9c2.2.2 4.5-.5 4.5-3.2C14 3.7 11 1.5 7.5 1.5z" fill="#e9a05b"/><circle cx="4.5" cy="5" r="1.2" fill="#d23b3b"/><circle cx="7.8" cy="3.9" r="1.1" fill="#f2d13c"/><circle cx="11" cy="5.6" r="1.1" fill="#5aa84a"/><circle cx="4" cy="8.6" r="1.1" fill="#3a6fc4"/><circle cx="6.5" cy="11" r="1.1" fill="#f6efe6"/></svg></span> Création de la vue 3D...</div>
<div class="a m" style="left:15px;top:970.58px;font-size:12.45px;line-height:17px;font-family:'Liberation Mono',monospace;color:#000;font-weight:normal;white-space:pre;"><span style="display:inline-block;width:16.5px"><svg width="16" height="16" viewBox="0 0 15 15" style="display:inline-block;vertical-align:-3px"><rect x="1" y="1" width="13" height="13" rx="2" fill="#77b255"/><path d="M3.8 7.8l2.6 2.6l5-5.6" stroke="#fff" stroke-width="2.2" fill="none"/></svg></span> Vue 3D affichée</div>
<div class="a m" style="left:15px;top:1003.98px;font-size:12.45px;line-height:17px;font-family:'Liberation Mono',monospace;color:#000;font-weight:normal;white-space:pre;"><span style="display:inline-block;width:16.5px"><svg width="16" height="16" viewBox="0 0 15 15" style="display:inline-block;vertical-align:-3px"><rect x="1" y="1" width="13" height="13" rx="1.5" fill="#31373d"/><rect x="3.5" y="1" width="8" height="5" fill="#ccd6dd"/><rect x="3" y="9" width="9" height="5" fill="#e1e8ed"/><rect x="1" y="12" width="2" height="2" fill="#3b88c3"/></svg></span> Export OBJ en cours...</div>
<div class="a m" style="left:15px;top:1037.38px;font-size:12.45px;line-height:17px;font-family:'Liberation Mono',monospace;color:#000;font-weight:normal;white-space:pre;"><span style="display:inline-block;width:16.5px"><svg width="16" height="16" viewBox="0 0 15 15" style="display:inline-block;vertical-align:-3px"><rect x="1" y="1" width="13" height="13" rx="2" fill="#77b255"/><path d="M3.8 7.8l2.6 2.6l5-5.6" stroke="#fff" stroke-width="2.2" fill="none"/></svg></span> EXPORT TERMINÉ !</div>
<div class="a m" style="left:15px;top:1054.08px;font-size:12.45px;line-height:17px;font-family:'Liberation Mono',monospace;color:#000;font-weight:normal;white-space:pre;"><span style="display:inline-block;width:16.5px"><svg width="16" height="16" viewBox="0 0 15 15" style="display:inline-block;vertical-align:-3px"><path d="M1.5 4.5L7.5 2l6 2.5v7.5l-6 2.5l-6-2.5z" fill="#c1884a"/><path d="M1.5 4.5l6 2.5l6-2.5v7.5l-6 2.5l-6-2.5z" fill="#a06a35"/><path d="M7.5 7v7.5l6-2.5V4.5z" fill="#d9a066"/><path d="M4 3.4l6 2.6" stroke="#f0d0a0" stroke-width="1.2"/></svg></span> Fichier : output/carte_3D.obj</div>
<div class="a m" style="left:15px;top:1070.78px;font-size:12.45px;line-height:17px;font-family:'Liberation Mono',monospace;color:#000;font-weight:normal;white-space:pre;"><span style="display:inline-block;width:16.5px"><svg width="16" height="16" viewBox="0 0 15 15" style="display:inline-block;vertical-align:-3px"><rect x="4" y="1.5" width="7" height="5" fill="#d9dee2" stroke="#8a9299" stroke-width=".8"/><rect x="1" y="6" width="13" height="6.5" rx="2" fill="#66757f"/><rect x="3.5" y="10" width="8" height="4" fill="#e1e8ed"/></svg></span>  Format compatible impression 3D</div>
<div class="a m" style="left:15px;top:1104.18px;font-size:12.45px;line-height:17px;font-family:'Liberation Mono',monospace;color:#000;font-weight:normal;white-space:pre;"><span style="display:inline-block;width:16.5px"><svg width="16" height="16" viewBox="0 0 15 15" style="display:inline-block;vertical-align:-3px"><rect x="1" y="1" width="13" height="13" rx="1.5" fill="#7fa3b5"/><rect x="6.6" y="3" width="1.9" height="1.9" fill="#fff"/><rect x="6.6" y="6" width="1.9" height="6" fill="#fff"/></svg></span>  Le format OBJ fonctionne avec tous les slicers</div>
<div class="a m" style="left:15px;top:1120.88px;font-size:12.45px;line-height:17px;font-family:'Liberation Mono',monospace;color:#000;font-weight:normal;white-space:pre;">   (Cura, PrusaSlicer acceptent .obj )</div>
<div class="a m" style="left:15px;top:1137.58px;font-size:12.45px;line-height:17px;font-family:'Liberation Mono',monospace;color:#1b26c4;font-weight:normal;white-space:pre;">&gt;</div>
<div class="a" style="left:30px;top:1137px;width:1.5px;height:17px;background:#b5b5b5;"></div>
<div class="a" style="left:1211px;top:769px;width:15px;height:393px;background:#fbfbfb;"></div>
<svg class="a" style="left:1213px;top:773px;" width="9" height="6" viewBox="0 0 9 6"><path d="M0 6h9L4.5 0z" fill="#7e7e7e"/></svg>
<div class="a" style="left:1214px;top:936px;width:9px;height:208px;background:#8a8a8a;border-radius:5px"></div>
<svg class="a" style="left:1213px;top:1149px;" width="9" height="6" viewBox="0 0 9 6"><path d="M0 0h9L4.5 6z" fill="#7e7e7e"/></svg>
<div class="a" style="left:1214px;top:325px;width:9px;height:356px;background:#8a8a8a;border-radius:5px"></div>
<svg class="a" style="left:1213px;top:687px;" width="9" height="6" viewBox="0 0 9 6"><path d="M0 0h9L4.5 6z" fill="#7e7e7e"/></svg>
<div class="a" style="left:0px;top:1170px;width:1580px;height:4px;background:#2a5a9b;"></div>
<div class="a" style="left:0;top:1170px;width:1580px;height:4px;overflow:hidden"><div class="a" style="left:368px;top:-2px;font-size:14px;line-height:18px;color:#dfe6f0;white-space:pre;font-family:'Liberation Sans',sans-serif">Citation Policy | FAQ | Media Kit | Donate | Contact U</div></div>
<div class="a" style="left:1352px;top:1170px;width:32px;height:4px;background:#1f78d1;"></div>
<div class="a" style="left:1391px;top:1171px;width:4px;height:3px;background:#f0f0f0;"></div>
<div class="a" style="left:1421px;top:1170px;width:32px;height:4px;background:#cf2a2a;"></div>
<div class="a" style="left:1463px;top:1170px;width:27px;height:4px;background:#a0724a;"></div>
<div class="a" style="left:1500px;top:1171px;width:6px;height:3px;background:#e8e8e8;"></div>
<div class="a" style="left:1234px;top:90px;width:337px;height:406px;background:#fff;border:1px solid #d3d8db;border-radius:4px 4px 2px 2px"></div>
<div class="a" style="left:1235px;top:91px;width:335px;height:23px;background:#e5e8ea;border-radius:3px 3px 0 0;border-bottom:1px solid #d3d8db"></div>
<div class="a" style="left:1235px;top:91px;width:97px;height:23px;background:#f4f7f8;border-right:1px solid #d3d8db;border-radius:3px 0 0 0"></div>
<div class="a" style="left:1332px;top:91px;width:64px;height:22px;background:#e9ecee;border-right:1px solid #d3d8db"></div>
<div class="a" style="left:1396px;top:91px;width:95px;height:22px;background:#e9ecee;border-right:1px solid #d3d8db"></div>
<div class="a" style="left:1244px;top:92.53px;font-size:12.9px;line-height:18px;font-family:'Liberation Sans',sans-serif;color:#111;font-weight:bold;white-space:pre;">Environment</div>
<div class="a" style="left:1342px;top:92.50px;font-size:13px;line-height:18px;font-family:'Liberation Sans',sans-serif;color:#111;font-weight:bold;white-space:pre;">History</div>
<div class="a" style="left:1406px;top:93.20px;font-size:12.4px;line-height:17px;font-family:'Liberation Sans',sans-serif;color:#111;font-weight:bold;white-space:pre;">Connections</div>
<div class="a" style="left:1502px;top:93.20px;font-size:12.4px;line-height:17px;font-family:'Liberation Sans',sans-serif;color:#111;font-weight:bold;white-space:pre;">Tut</div>
<div class="a" style="left:1516px;top:91px;width:13px;height:22px;background:linear-gradient(90deg,rgba(229,232,234,0),#e5e8ea);"></div>
<svg class="a" style="left:1529px;top:97px;" width="32" height="14" viewBox="0 0 32 14"><rect x="0.8" y="7.8" width="13.4" height="5.4" rx="1" fill="none" stroke="#7d868c" stroke-width="1.6"/><rect x="0.8" y="8" width="13.4" height="2" fill="#7d868c"/><rect x="18.8" y="0.8" width="12.4" height="12.4" rx="1" fill="none" stroke="#7d868c" stroke-width="1.6"/><rect x="18.8" y="0.8" width="12.4" height="2.2" fill="#7d868c"/></svg>
<div class="a" style="left:1235px;top:114px;width:335px;height:22px;background:#f4f7f8;border-bottom:1px solid #d3d8db"></div>
<svg class="a" style="left:1240px;top:116px;" width="22" height="16" viewBox="0 0 22 16"><path d="M1 5h6l2 2h8v8H1z" fill="#e0b850"/><path d="M3 8h16l-3 7H1z" fill="#f1cf6a" stroke="#c99a2c" stroke-width=".6"/><path d="M11 7c2-4 5-5 8-4" stroke="#1aa070" stroke-width="2" fill="none"/><path d="M18 0l4 3l-4 3z" fill="#1aa070"/></svg>
<svg class="a" style="left:1268px;top:119px;" width="13" height="14" viewBox="0 0 13 14"><rect x="0.5" y="0.5" width="12" height="13" rx="1" fill="#4d8fd8" stroke="#3f7fc8"/><rect x="3" y="1" width="7" height="4" fill="#fff"/><rect x="3" y="8" width="7" height="5" fill="#fff"/><rect x="5" y="10" width="2" height="3" fill="#4d8fd8"/></svg>
<div class="a" style="left:1290px;top:118px;width:1px;height:16px;background:#cfd4d7;"></div>
<svg class="a" style="left:1296px;top:118px;" width="24" height="15" viewBox="0 0 24 15"><rect x="0.5" y="2.5" width="14" height="11" fill="#fff" stroke="#b9bfc4"/><path d="M0.5 6h14M0.5 9.5h14M5 2.5v11M10 2.5v11" stroke="#c9cfd3"/><path d="M9 9c1-4 4-5 8-5" stroke="#1aa070" stroke-width="2" fill="none"/><path d="M16 1l5 3l-5 3z" fill="#1aa070"/></svg>
<svg class="a" style="left:1321px;top:126px;" width="7" height="4" viewBox="0 0 7 4"><path d="M0 0h7l-3.5 4z" fill="#222"/></svg>
<div class="a" style="left:1331px;top:118px;width:1px;height:16px;background:#cfd4d7;"></div>
<svg class="a" style="left:1336px;top:119px;" width="14" height="14" viewBox="0 0 14 14"><circle cx="7" cy="7" r="6.5" fill="#e6e8ea"/><path d="M7 7V0.5A6.5 6.5 0 0 1 12.5 4z" fill="#3a9a8a"/></svg>
<div class="a" style="left:1355px;top:117.20px;font-size:12.4px;line-height:17px;font-family:'Liberation Sans',sans-serif;color:#222;font-weight:normal;white-space:pre;">1.18 GiB</div>
<svg class="a" style="left:1408px;top:126px;" width="7" height="4" viewBox="0 0 7 4"><path d="M0 0h7l-3.5 4z" fill="#222"/></svg>
<div class="a" style="left:1422px;top:118px;width:1px;height:16px;background:#cfd4d7;"></div>
<svg class="a" style="left:1430px;top:116px;" width="18" height="17" viewBox="0 0 18 17"><path d="M16 1L9 9" stroke="#a5452a" stroke-width="1.8"/><path d="M9 8l-7 6c2 2 4 2 6 1l3-5z" fill="#d9a53a"/><path d="M3 14l5-4M5 15l4-3" stroke="#9a7020" stroke-width=".6"/></svg>
<svg class="a" style="left:1478px;top:120px;" width="13" height="12" viewBox="0 0 13 12"><path d="M1 1.5h11M1 4.5h11M1 7.5h11M1 10.5h11" stroke="#8d959b" stroke-width="1"/></svg>
<div class="a" style="left:1494px;top:117.20px;font-size:12.4px;line-height:17px;font-family:'Liberation Sans',sans-serif;color:#222;font-weight:normal;white-space:pre;">List</div>
<svg class="a" style="left:1521px;top:126px;" width="7" height="4" viewBox="0 0 7 4"><path d="M0 0h7l-3.5 4z" fill="#222"/></svg>
<div class="a" style="left:1535px;top:118px;width:1px;height:16px;background:#cfd4d7;"></div>
<svg class="a" style="left:1541px;top:117px;" width="16" height="16" viewBox="0 0 16 16"><path d="M13 5A6 6 0 1 0 13.5 10" fill="none" stroke="#d4dae6" stroke-width="2.5"/><path d="M10 2h5v5z" fill="#d4dae6"/></svg>
<svg class="a" style="left:1560px;top:126px;" width="7" height="4" viewBox="0 0 7 4"><path d="M0 0h7l-3.5 4z" fill="#222"/></svg>
<div class="a" style="left:1235px;top:136px;width:335px;height:23px;background:#f4f7f8;border-bottom:1px solid #d3d8db"></div>
<div class="a" style="left:1243px;top:139.20px;font-size:12.4px;line-height:17px;font-family:'Liberation Sans',sans-serif;color:#222;font-weight:normal;white-space:pre;">R</div>
<svg class="a" style="left:1256px;top:148px;" width="7" height="4" viewBox="0 0 7 4"><path d="M0 0h7l-3.5 4z" fill="#222"/></svg>
<div class="a" style="left:1271px;top:140px;width:1px;height:16px;background:#cfd4d7;"></div>
<svg class="a" style="left:1279px;top:140px;" width="17" height="17" viewBox="0 0 17 17"><rect x="4" y="0.5" width="9" height="10" rx="1.5" fill="#b864c8"/><rect x="7" y="6" width="9" height="10" rx="1.5" fill="#5a8fe0"/><rect x="0.5" y="4" width="9" height="9" rx="1.5" fill="#a7c97a"/></svg>
<div class="a" style="left:1300px;top:139.20px;font-size:12.4px;line-height:17px;font-family:'Liberation Sans',sans-serif;color:#222;font-weight:normal;white-space:pre;">Global Environment</div>
<svg class="a" style="left:1414px;top:148px;" width="7" height="4" viewBox="0 0 7 4"><path d="M0 0h7l-3.5 4z" fill="#222"/></svg>
<div class="a" style="left:1441px;top:140px;width:121px;height:17px;background:#fff;border:1px solid #d5dadd;border-radius:3px"></div>
<svg class="a" style="left:1447px;top:142px;" width="13" height="13" viewBox="0 0 13 13"><circle cx="5" cy="5" r="3.8" fill="none" stroke="#8e959a" stroke-width="1.6"/><path d="M8 8l4 4" stroke="#8e959a" stroke-width="2"/></svg>
<div class="a" style="left:1235px;top:159px;width:335px;height:21px;background:#eef1f3;border-bottom:1px solid #d6dbde"></div>
<div class="a m" style="left:1240px;top:162.18px;font-size:12.45px;line-height:17px;font-family:'Liberation Mono',monospace;color:#222;font-weight:normal;white-space:pre;">Data</div>
<div class="a" style="left:1235px;top:180px;width:335px;height:21px;background:#fff;border-bottom:1px solid #d6dbde"></div>
<svg class="a" style="left:1240px;top:184px;" width="13" height="13" viewBox="0 0 13 13"><circle cx="6.5" cy="6.5" r="6" fill="#6b9ee0"/><circle cx="6.5" cy="6.5" r="4.3" fill="#dceaf8"/><path d="M5 3.8v5.4l4-2.7z" fill="#4a7fc8"/></svg>
<div class="a m" style="left:1256px;top:183.18px;font-size:12.45px;line-height:17px;font-family:'Liberation Mono',monospace;color:#222;font-weight:normal;white-space:pre;">dem</div>
<div class="a" style="left:1338px;top:180px;width:1px;height:21px;background:#d6dbde;"></div>
<div class="a m" style="left:1345px;top:183.18px;font-size:12.45px;line-height:17px;font-family:'Liberation Mono',monospace;color:#222;font-weight:normal;white-space:pre;">Formal class  RasterLayer</div>
<svg class="a" style="left:1536px;top:184px;" width="14" height="14" viewBox="0 0 14 14"><circle cx="5.5" cy="5.5" r="4" fill="none" stroke="#b3b9be" stroke-width="1.8"/><path d="M8.5 8.5l4.5 4.5" stroke="#b3b9be" stroke-width="2.2"/></svg>
<div class="a" style="left:1235px;top:201px;width:335px;height:21px;background:#fff;border-bottom:1px solid #d6dbde"></div>
<svg class="a" style="left:1240px;top:205px;" width="13" height="13" viewBox="0 0 13 13"><circle cx="6.5" cy="6.5" r="6" fill="#6b9ee0"/><circle cx="6.5" cy="6.5" r="4.3" fill="#dceaf8"/><path d="M5 3.8v5.4l4-2.7z" fill="#4a7fc8"/></svg>
<div class="a m" style="left:1256px;top:204.18px;font-size:12.45px;line-height:17px;font-family:'Liberation Mono',monospace;color:#222;font-weight:normal;white-space:pre;">elmat</div>
<div class="a" style="left:1338px;top:201px;width:1px;height:21px;background:#d6dbde;"></div>
<div class="a m" style="left:1345px;top:204.18px;font-size:12.45px;line-height:17px;font-family:'Liberation Mono',monospace;color:#222;font-weight:normal;white-space:pre;">Large matrix (216712 ele…</div>
<svg class="a" style="left:1537px;top:205px;" width="15" height="13" viewBox="0 0 15 13"><rect x="0.5" y="0.5" width="14" height="12" rx="1.5" fill="#fff" stroke="#c3cace"/><path d="M0.5 4h14M0.5 7h14M0.5 10h14M5 0.5v12M10 0.5v12" stroke="#d5dbdf" stroke-width=".8"/></svg>
<div class="a" style="left:1235px;top:222px;width:335px;height:21px;background:#eef1f3;border-bottom:1px solid #d6dbde"></div>
<div class="a m" style="left:1240px;top:225.18px;font-size:12.45px;line-height:17px;font-family:'Liberation Mono',monospace;color:#222;font-weight:normal;white-space:pre;">Values</div>
<div class="a" style="left:1235px;top:243px;width:335px;height:22px;background:#fff;border-bottom:1px solid #d6dbde"></div>
<svg class="a" style="left:1240px;top:247px;" width="13" height="13" viewBox="0 0 13 13"><circle cx="6.5" cy="6.5" r="6" fill="#6b9ee0"/><circle cx="6.5" cy="6.5" r="4.3" fill="#dceaf8"/><path d="M5 3.8v5.4l4-2.7z" fill="#4a7fc8"/></svg>
<div class="a m" style="left:1256px;top:246.18px;font-size:12.45px;line-height:17px;font-family:'Liberation Mono',monospace;color:#222;font-weight:normal;white-space:pre;">shade</div>
<div class="a" style="left:1338px;top:243px;width:1px;height:22px;background:#d6dbde;"></div>
<div class="a m" style="left:1345px;top:246.18px;font-size:12.45px;line-height:17px;font-family:'Liberation Mono',monospace;color:#222;font-weight:normal;white-space:pre;">Large rayimg (650136 eleme…</div>
<div class="a" style="left:1234px;top:503px;width:337px;height:660px;background:#fff;border:1px solid #d3d8db;border-radius:4px 4px 2px 2px"></div>
<div class="a" style="left:1235px;top:504px;width:335px;height:23px;background:#e5e8ea;border-radius:3px 3px 0 0;border-bottom:1px solid #d3d8db"></div>
<div class="a" style="left:1235px;top:504px;width:46px;height:23px;background:#f4f7f8;border-right:1px solid #d3d8db;border-radius:3px 0 0 0"></div>
<div class="a" style="left:1282px;top:504px;width:50px;height:22px;background:#e9ecee;border-right:1px solid #d3d8db"></div>
<div class="a" style="left:1332px;top:504px;width:78px;height:22px;background:#e9ecee;border-right:1px solid #d3d8db"></div>
<div class="a" style="left:1410px;top:504px;width:47px;height:22px;background:#e9ecee;border-right:1px solid #d3d8db"></div>
<div class="a" style="left:1457px;top:504px;width:62px;height:22px;background:#e9ecee;border-right:1px solid #d3d8db"></div>
<div class="a" style="left:1244px;top:506.20px;font-size:12.4px;line-height:17px;font-family:'Liberation Sans',sans-serif;color:#111;font-weight:bold;white-space:pre;">Files</div>
<div class="a" style="left:1292px;top:506.20px;font-size:12.4px;line-height:17px;font-family:'Liberation Sans',sans-serif;color:#111;font-weight:bold;white-space:pre;">Plots</div>
<div class="a" style="left:1342px;top:506.20px;font-size:12.4px;line-height:17px;font-family:'Liberation Sans',sans-serif;color:#111;font-weight:bold;white-space:pre;">Packages</div>
<div class="a" style="left:1420px;top:506.20px;font-size:12.4px;line-height:17px;font-family:'Liberation Sans',sans-serif;color:#111;font-weight:bold;white-space:pre;">Help</div>
<div class="a" style="left:1467px;top:506.20px;font-size:12.4px;line-height:17px;font-family:'Liberation Sans',sans-serif;color:#111;font-weight:bold;white-space:pre;">Viewer</div>
<svg class="a" style="left:1529px;top:510px;" width="32" height="14" viewBox="0 0 32 14"><rect x="0.8" y="7.8" width="13.4" height="5.4" rx="1" fill="none" stroke="#7d868c" stroke-width="1.6"/><rect x="0.8" y="8" width="13.4" height="2" fill="#7d868c"/><rect x="18.8" y="0.8" width="12.4" height="12.4" rx="1" fill="none" stroke="#7d868c" stroke-width="1.6"/><rect x="18.8" y="0.8" width="12.4" height="2.2" fill="#7d868c"/></svg>
<div class="a" style="left:1235px;top:526px;width:335px;height:22px;background:#f4f7f8;border-bottom:1px solid #d3d8db"></div>
<svg class="a" style="left:1240px;top:529px;" width="20" height="17" viewBox="0 0 20 17"><path d="M5 6h5l1.5 1.5H19V16H5z" fill="#e8c158"/><circle cx="5.5" cy="5.5" r="5" fill="#1aa060"/><path d="M5.5 2.5v6M2.5 5.5h6" stroke="#fff" stroke-width="2"/></svg>
<div class="a" style="left:1266px;top:530px;width:1px;height:16px;background:#cfd4d7;"></div>
<svg class="a" style="left:1270px;top:529px;" width="20" height="16" viewBox="0 0 20 16"><rect x="6" y="4" width="10" height="12" fill="#fff"/><circle cx="6" cy="5.5" r="5" fill="#1aa060"/><path d="M6 2.5v6M3 5.5h6" stroke="#fff" stroke-width="2"/></svg>
<svg class="a" style="left:1294px;top:537px;" width="7" height="4" viewBox="0 0 7 4"><path d="M0 0h7l-3.5 4z" fill="#222"/></svg>
<div class="a" style="left:1305px;top:530px;width:1px;height:16px;background:#cfd4d7;"></div>
<svg class="a" style="left:1311px;top:529px;" width="18" height="16" viewBox="0 0 18 16"><rect x="6" y="4" width="10" height="12" fill="#fff"/><circle cx="5.5" cy="5.5" r="5" fill="#d0312d"/><path d="M3.5 3.5l4 4M7.5 3.5l-4 4" stroke="#fff" stroke-width="1.8"/></svg>
<svg class="a" style="left:1337px;top:530px;" width="19" height="16" viewBox="0 0 19 16"><rect x="0.5" y="3.5" width="14" height="12" fill="#fff" stroke="#c5cbd0"/><path d="M4 10h7" stroke="#2a8ad8" stroke-width="2.4"/><path d="M10 6.5l5 3.5l-5 3.5z" fill="#2a8ad8"/></svg>
<div class="a" style="left:1360px;top:530px;width:1px;height:16px;background:#cfd4d7;"></div>
<svg class="a" style="left:1368px;top:529px;" width="18" height="18" viewBox="0 0 18 18"><path d="M9 1l2 2.5l3-.5l.5 3l2.5 2l-2.5 2l-.5 3l-3-.5L9 17l-2-2.5l-3 .5l-.5-3L1 9l2.5-2l.5-3l3 .5z" fill="#4a90d0"/><circle cx="9" cy="9" r="3" fill="#dcebf8"/></svg>
<svg class="a" style="left:1391px;top:538px;" width="7" height="4" viewBox="0 0 7 4"><path d="M0 0h7l-3.5 4z" fill="#222"/></svg>
<svg class="a" style="left:1549px;top:529px;" width="16" height="16" viewBox="0 0 16 16"><path d="M13 5A6 6 0 1 0 13.5 10" fill="none" stroke="#d4dae6" stroke-width="2.5"/><path d="M10 2h5v5z" fill="#d4dae6"/></svg>
<div class="a" style="left:1235px;top:548px;width:335px;height:21px;background:#fff;border-bottom:1px solid #d3d8db"></div>
<div class="a" style="left:1240px;top:552px;width:13px;height:13px;background:#fff;border:1px solid #8f959a;border-radius:3px"></div>
<svg class="a" style="left:1259px;top:551px;" width="18" height="16" viewBox="0 0 18 16"><path d="M9 1L1 8h2.5v7.5h11V8H17z" fill="#fff" stroke="#c0392b" stroke-width="1.6" stroke-linejoin="round"/><rect x="7.5" y="10" width="3" height="5.5" fill="#b5651d"/></svg>
<div class="a" style="left:1284px;top:551.34px;font-size:12px;line-height:17px;font-family:'Liberation Sans',sans-serif;color:#2a3fae;font-weight:normal;white-space:pre;">Home</div>
<svg class="a" style="left:1322px;top:557px;" width="5" height="8" viewBox="0 0 5 8"><path d="M1 1l3 3l-3 3" fill="none" stroke="#999" stroke-width="1"/></svg>
<div class="a" style="left:1334px;top:551.34px;font-size:12px;line-height:17px;font-family:'Liberation Sans',sans-serif;color:#2a3fae;font-weight:normal;white-space:pre;">rayshader</div>
<svg class="a" style="left:1394px;top:557px;" width="5" height="8" viewBox="0 0 5 8"><path d="M1 1l3 3l-3 3" fill="none" stroke="#999" stroke-width="1"/></svg>
<div class="a" style="left:1406px;top:551.34px;font-size:12px;line-height:17px;font-family:'Liberation Sans',sans-serif;color:#2a3fae;font-weight:normal;white-space:pre;">Map_to_obj</div>
<svg class="a" style="left:1527px;top:551px;" width="16" height="17" viewBox="0 0 16 17"><path d="M8 1l7 3v9l-7 3.5l-7-3.5V4z" fill="#c6e6f5" stroke="#8ac8e6" stroke-width="1"/><text x="4.8" y="12.5" font-family="Liberation Serif" font-size="10" fill="#3f6fa8">R</text></svg>
<div class="a" style="left:1549px;top:549px;width:1px;height:20px;background:#d3d8db;"></div>
<div class="a" style="left:1553px;top:553.34px;font-size:12px;line-height:17px;font-family:'Liberation Sans',sans-serif;color:#222;font-weight:normal;white-space:pre;">...</div>
<div class="a" style="left:1235px;top:569px;width:335px;height:20px;background:#f4f7f8;border-bottom:1px solid #d3d8db"></div>
<div class="a" style="left:1264px;top:569px;width:1px;height:20px;background:#d3d8db;"></div>
<div class="a" style="left:1290px;top:569px;width:1px;height:20px;background:#d3d8db;"></div>
<div class="a" style="left:1494px;top:569px;width:1px;height:20px;background:#d3d8db;"></div>
<svg class="a" style="left:1300px;top:574px;" width="10" height="8" viewBox="0 0 10 8"><path d="M0 8h10L5 0z" fill="#777"/></svg>
<div class="a" style="left:1314px;top:570.41px;font-size:11.8px;line-height:17px;font-family:'Liberation Sans',sans-serif;color:#444;font-weight:normal;white-space:pre;">Name</div>
<div class="a" style="left:1501px;top:570.41px;font-size:11.8px;line-height:17px;font-family:'Liberation Sans',sans-serif;color:#444;font-weight:normal;white-space:pre;">Size</div>
<svg class="a" style="left:1270px;top:590px;" width="16" height="16" viewBox="0 0 16 16"><path d="M8 1L2.5 7H6v8h9v-3.5H9.5V7H13.5z" fill="#1aa060"/></svg>
<div class="a" style="left:1294px;top:593.34px;font-size:12px;line-height:17px;font-family:'Liberation Sans',sans-serif;color:#2a3fae;font-weight:normal;white-space:pre;">..</div>
<div class="a" style="left:1245px;top:615px;width:13px;height:13px;background:#fff;border:1px solid #8f959a;border-radius:3px"></div>
<svg class="a" style="left:1270px;top:614px;" width="17" height="16" viewBox="0 0 17 16"><path d="M5.5 0.5h7l3.5 3.5v11.5h-10.5z" fill="#fff" stroke="#b7bdc2"/><path d="M1 3l4-1.5l4 1.5v8l-4 1.5l-4-1.5z" fill="#2c9c8c"/><text x="2.7" y="10" font-family="Liberation Sans" font-size="6" fill="#fff" font-weight="bold">R</text></svg>
<div class="a" style="left:1294px;top:614.67px;font-size:12.5px;line-height:18px;font-family:'Liberation Sans',sans-serif;color:#2233ab;font-weight:normal;white-space:pre;">.RData</div>
<div class="a" style="left:1498px;top:614.63px;font-size:12.6px;line-height:18px;font-family:'Liberation Sans',sans-serif;color:#222;font-weight:normal;white-space:pre;">20.6 MB</div>
<div class="a" style="left:1245px;top:638px;width:13px;height:13px;background:#fff;border:1px solid #8f959a;border-radius:3px"></div>
<svg class="a" style="left:1270px;top:637px;" width="17" height="16" viewBox="0 0 17 16"><path d="M5.5 0.5h7l3.5 3.5v11.5h-10.5z" fill="#fff" stroke="#b7bdc2"/><circle cx="5" cy="5" r="4" fill="#fff" stroke="#8e959a"/><path d="M5 2.5v2.5h2" stroke="#8e959a" fill="none"/></svg>
<div class="a" style="left:1294px;top:637.67px;font-size:12.5px;line-height:18px;font-family:'Liberation Sans',sans-serif;color:#2233ab;font-weight:normal;white-space:pre;">.Rhistory</div>
<div class="a" style="left:1498px;top:637.63px;font-size:12.6px;line-height:18px;font-family:'Liberation Sans',sans-serif;color:#222;font-weight:normal;white-space:pre;">46 B</div>
<div class="a" style="left:1245px;top:661px;width:13px;height:13px;background:#fff;border:1px solid #8f959a;border-radius:3px"></div>
<svg class="a" style="left:1270px;top:660px;" width="17" height="16" viewBox="0 0 17 16"><path d="M1 2.5h5.5l1.5 1.5h8v11H1z" fill="#e0b440"/><path d="M1 5.5h15v9.5H1z" fill="#f3cf5a"/></svg>
<div class="a" style="left:1294px;top:660.67px;font-size:12.5px;line-height:18px;font-family:'Liberation Sans',sans-serif;color:#2233ab;font-weight:normal;white-space:pre;">data</div>
<div class="a" style="left:1245px;top:684px;width:13px;height:13px;background:#fff;border:1px solid #8f959a;border-radius:3px"></div>
<svg class="a" style="left:1270px;top:683px;" width="17" height="16" viewBox="0 0 17 16"><path d="M5.5 0.5h7l3.5 3.5v11.5h-10.5z" fill="#fff" stroke="#b7bdc2"/><circle cx="4.8" cy="5" r="4" fill="#4d79b0"/><text x="2.6" y="7.4" font-family="Liberation Sans" font-size="6" font-weight="bold" fill="#dce6f2">R</text></svg>
<div class="a" style="left:1294px;top:683.67px;font-size:12.5px;line-height:18px;font-family:'Liberation Sans',sans-serif;color:#2233ab;font-weight:normal;white-space:pre;">map_to_OBJ.R</div>
<div class="a" style="left:1498px;top:683.63px;font-size:12.6px;line-height:18px;font-family:'Liberation Sans',sans-serif;color:#222;font-weight:normal;white-space:pre;">1.4 KB</div>
<div class="a" style="left:1245px;top:707px;width:13px;height:13px;background:#fff;border:1px solid #8f959a;border-radius:3px"></div>
<svg class="a" style="left:1270px;top:706px;" width="17" height="17" viewBox="0 0 17 17"><path d="M8.5 1l7.5 3v9l-7.5 3.5L1 13V4z" fill="#c6e6f5" stroke="#8ac8e6" stroke-width="1"/><text x="5" y="12.5" font-family="Liberation Serif" font-size="10" fill="#3f6fa8">R</text></svg>
<div class="a" style="left:1294px;top:706.67px;font-size:12.5px;line-height:18px;font-family:'Liberation Sans',sans-serif;color:#2233ab;font-weight:normal;white-space:pre;">Map_to_obj.Rproj</div>
<div class="a" style="left:1498px;top:706.63px;font-size:12.6px;line-height:18px;font-family:'Liberation Sans',sans-serif;color:#222;font-weight:normal;white-space:pre;">205 B</div>
<div class="a" style="left:1245px;top:730px;width:13px;height:13px;background:#fff;border:1px solid #8f959a;border-radius:3px"></div>
<svg class="a" style="left:1270px;top:729px;" width="17" height="16" viewBox="0 0 17 16"><path d="M1 2.5h5.5l1.5 1.5h8v11H1z" fill="#e0b440"/><path d="M1 5.5h15v9.5H1z" fill="#f3cf5a"/></svg>
<div class="a" style="left:1294px;top:729.67px;font-size:12.5px;line-height:18px;font-family:'Liberation Sans',sans-serif;color:#2233ab;font-weight:normal;white-space:pre;">output</div>
<div class="a" style="left:417px;top:262px;width:800px;height:610px;background:#fff;border-radius:5px 5px 0 0;box-shadow:0 5px 18px 3px rgba(0,0,0,0.30),0 0 0 1px rgba(0,0,0,0.14)"></div>
<div class="a" style="left:417px;top:262px;width:800px;height:28px;background:#d9d9d9;border-radius:5px 5px 0 0;border-bottom:1px solid #c9c9c9"></div>
<div class="a" style="left:816px;top:261.40px;font-size:20.5px;line-height:29px;font-family:'Liberation Sans',sans-serif;color:#3a3a3a;font-weight:normal;white-space:pre;transform:translateX(-50%);">RGL device 1 [Focus]</div>
<div class="a" style="left:1129px;top:274px;width:8px;height:2.2px;background:#4a4a4a;"></div>
<svg class="a" style="left:1161px;top:271px;" width="8" height="8" viewBox="0 0 8 8"><path d="M0 0h8v8H0z" fill="#4a4a4a"/><path d="M0.5 7.5L7.5 0.5" stroke="#d9d9d9" stroke-width="1.8"/></svg>
<svg class="a" style="left:1189px;top:268px;" width="15" height="15" viewBox="0 0 15 15"><circle cx="7.5" cy="7.5" r="7.2" fill="#8cb56b"/><path d="M4.8 4.8L10.2 10.2M10.2 4.8L4.8 10.2" stroke="#fff" stroke-width="2"/></svg>
<svg class="a" style="left:0;top:0" width="1580" height="1174" viewBox="0 0 1580 1174"><defs>
<clipPath id="tc"><polygon points="765.0,403.0 790.0,410.0 810.0,417.0 845.0,428.0 877.0,443.0 920.0,455.0 955.0,464.0 990.0,470.0 1049.0,478.0 1075.0,484.0 1102.0,495.0 1091.6,516.0 1074.7,526.0 1046.6,557.0 1041.0,574.0 1029.8,599.0 1015.7,619.0 990.4,636.0 973.6,661.0 947.0,666.6 934.0,692.0 917.4,711.6 897.8,739.7 871.0,762.0 855.7,755.0 818.6,747.6 769.0,738.0 732.0,728.0 695.0,718.0 658.0,702.0 628.5,698.0 581.6,683.5 528.0,660.0 540.0,647.0 551.0,635.0 566.0,619.0 583.0,600.0 612.0,569.0 641.0,537.0 680.0,495.0 717.0,455.0 742.0,428.0 765.0,403.0"/></clipPath>
<filter id="b6" x="-30%" y="-30%" width="160%" height="160%"><feGaussianBlur stdDeviation="6"/></filter>
<filter id="b1" x="-30%" y="-30%" width="160%" height="160%"><feGaussianBlur stdDeviation="2.4"/></filter>
<filter id="b3" x="-30%" y="-30%" width="160%" height="160%"><feGaussianBlur stdDeviation="3"/></filter>
<filter id="nz" x="0" y="0" width="100%" height="100%"><feTurbulence type="fractalNoise" baseFrequency="0.22 0.16" numOctaves="3" seed="7"/><feColorMatrix type="matrix" values="0 0 0 0 0.42  0 0 0 0 0.30  0 0 0 0 0.20  0 0 0 -3.4 1.75"/></filter>
<filter id="nz2" x="0" y="0" width="100%" height="100%"><feTurbulence type="fractalNoise" baseFrequency="0.05 0.12" numOctaves="2" seed="11"/><feColorMatrix type="matrix" values="0 0 0 0 1  0 0 0 0 0.93  0 0 0 0 0.80  0 0 0 3 -1.55"/></filter>
<filter id="relief" x="500" y="380" width="620" height="420" filterUnits="userSpaceOnUse"><feTurbulence type="fractalNoise" baseFrequency="0.035 0.05" numOctaves="4" seed="5" result="n"/><feDiffuseLighting in="n" surfaceScale="5" diffuseConstant="1.22" lighting-color="#ffffff" result="l"><feDistantLight azimuth="315" elevation="50"/></feDiffuseLighting><feComponentTransfer in="l" result="l2"><feFuncR type="linear" slope="0.75" intercept="0.28"/><feFuncG type="linear" slope="0.78" intercept="0.25"/><feFuncB type="linear" slope="0.7" intercept="0.33"/></feComponentTransfer><feBlend in="l2" in2="SourceGraphic" mode="multiply"/></filter>
<filter id="sh" x="-10%" y="-10%" width="120%" height="130%"><feGaussianBlur stdDeviation="6"/></filter>
</defs>
<polygon points="530.0,678.0 871.0,794.0 1104.0,528.0 1102.0,500.0" fill="rgba(0,0,0,0.30)" filter="url(#sh)"/>
<polygon points="528.0,660.0 581.6,683.5 628.5,698.0 658.0,702.0 695.0,718.0 732.0,728.0 769.0,738.0 818.6,747.6 855.7,755.0 871.0,762.0 897.8,739.7 917.4,711.6 934.0,692.0 947.0,666.6 973.6,661.0 990.4,636.0 1015.7,619.0 1029.8,599.0 1041.0,574.0 1046.6,557.0 1074.7,526.0 1091.6,516.0 1102.0,495.0 1102.0,495.0 1102.0,523.0 871.0,786.0 528.5,674.0" fill="#2f2f2f"/>
<path d="M871 763V786" stroke="#5a5a5a" stroke-width="1"/>
<g clip-path="url(#tc)">
<g filter="url(#relief)">
<polygon points="765.0,403.0 790.0,410.0 810.0,417.0 845.0,428.0 877.0,443.0 920.0,455.0 955.0,464.0 990.0,470.0 1049.0,478.0 1075.0,484.0 1102.0,495.0 1091.6,516.0 1074.7,526.0 1046.6,557.0 1041.0,574.0 1029.8,599.0 1015.7,619.0 990.4,636.0 973.6,661.0 947.0,666.6 934.0,692.0 917.4,711.6 897.8,739.7 871.0,762.0 855.7,755.0 818.6,747.6 769.0,738.0 732.0,728.0 695.0,718.0 658.0,702.0 628.5,698.0 581.6,683.5 528.0,660.0 540.0,647.0 551.0,635.0 566.0,619.0 583.0,600.0 612.0,569.0 641.0,537.0 680.0,495.0 717.0,455.0 742.0,428.0 765.0,403.0" fill="#e2bf8f"/>
<polygon points="765.0,403.0 850.0,430.0 960.0,462.0 880.0,485.0 780.0,520.0 700.0,560.0 620.0,600.0 560.0,640.0 530.0,650.0 600.0,570.0 700.0,470.0" fill="#cfa982" filter="url(#b6)"/>
<polygon points="545.0,660.0 600.0,632.0 680.0,600.0 760.0,578.0 830.0,574.0 770.0,596.0 690.0,620.0 610.0,655.0 570.0,675.0" fill="#f5d9a8" filter="url(#b6)"/>
<polygon points="700.0,585.0 780.0,540.0 880.0,500.0 960.0,492.0 1040.0,494.0 1095.0,508.0 1060.0,570.0 1030.0,600.0 950.0,592.0 860.0,590.0 790.0,600.0 720.0,612.0" fill="#f7dcaa" filter="url(#b6)"/>
<polygon points="680.0,684.0 740.0,664.0 800.0,652.0 880.0,644.0 960.0,642.0 990.0,638.0 973.0,661.0 947.0,667.0 934.0,692.0 917.0,712.0 898.0,740.0 871.0,762.0 820.0,748.0 770.0,738.0 720.0,722.0" fill="#f8dcac" filter="url(#b6)"/>
<polygon points="528.0,662.0 551.0,637.0 590.0,618.0 640.0,645.0 640.0,692.0 600.0,690.0 580.0,684.0" fill="#f5d9a8" filter="url(#b6)"/>
<polygon points="545.0,640.0 600.0,605.0 650.0,578.0 706.0,548.0 778.0,521.0 881.0,478.0 960.0,470.0 1037.0,475.0 1100.0,492.0 1100.0,505.0 1037.0,492.0 960.0,488.0 885.0,496.0 790.0,540.0 720.0,570.0 660.0,600.0 600.0,640.0 560.0,660.0" fill="#b48e68" filter="url(#b6)"/>
<polygon points="647.6,647.6 684.8,607.7 759.2,586.5 812.4,583.8 852.3,599.7 878.9,631.6 839.0,642.3 785.8,645.0 732.7,660.9 679.5,674.2 647.6,674.2" fill="#c09a74" filter="url(#b3)"/>
<ellipse cx="617" cy="676" rx="22" ry="12" fill="#cba785" filter="url(#b3)"/>
<polygon points="825.7,700.7 905.4,722.0 892.0,738.0 825.7,716.7" fill="#cfa986" filter="url(#b3)"/>
</g>
<g filter="url(#b1)"><path d="M730 648 l-8.8 32" stroke="#8f8c84" stroke-width="2.9" opacity="0.28"/><path d="M741 651 l-10.9 23" stroke="#8f8c84" stroke-width="3.3" opacity="0.28"/><path d="M752 648 l-5.0 26" stroke="#8f8c84" stroke-width="2.7" opacity="0.28"/><path d="M763 652 l-7.2 31" stroke="#8f8c84" stroke-width="2.2" opacity="0.28"/><path d="M774 650 l-7.9 38" stroke="#8f8c84" stroke-width="3.1" opacity="0.28"/><path d="M785 650 l-6.5 23" stroke="#8f8c84" stroke-width="2.9" opacity="0.28"/><path d="M796 647 l-5.8 23" stroke="#8f8c84" stroke-width="2.7" opacity="0.28"/><path d="M807 650 l-6.7 38" stroke="#8f8c84" stroke-width="3.4" opacity="0.28"/><path d="M818 647 l-8.3 36" stroke="#8f8c84" stroke-width="3.4" opacity="0.28"/><path d="M829 651 l-10.2 24" stroke="#8f8c84" stroke-width="2.3" opacity="0.28"/><path d="M840 652 l-7.2 30" stroke="#8f8c84" stroke-width="2.5" opacity="0.28"/><path d="M851 648 l-8.9 29" stroke="#8f8c84" stroke-width="2.9" opacity="0.28"/><path d="M862 648 l-6.9 38" stroke="#8f8c84" stroke-width="3.4" opacity="0.28"/><path d="M873 650 l-7.0 40" stroke="#8f8c84" stroke-width="2.2" opacity="0.28"/><path d="M884 650 l-5.6 39" stroke="#8f8c84" stroke-width="2.9" opacity="0.28"/><path d="M895 648 l-6.0 26" stroke="#8f8c84" stroke-width="2.9" opacity="0.28"/><path d="M906 645 l-5.9 23" stroke="#8f8c84" stroke-width="3.5" opacity="0.28"/><path d="M917 643 l-8.5 36" stroke="#8f8c84" stroke-width="2.2" opacity="0.28"/><path d="M928 644 l-5.8 36" stroke="#8f8c84" stroke-width="2.1" opacity="0.28"/><path d="M1010 504 l-39 18" stroke="#8f8c84" stroke-width="2.9" opacity="0.26"/><path d="M1057 545 l-45 18" stroke="#8f8c84" stroke-width="2.1" opacity="0.26"/><path d="M1008 503 l-29 19" stroke="#8f8c84" stroke-width="2.6" opacity="0.26"/><path d="M950 504 l-42 18" stroke="#8f8c84" stroke-width="3.0" opacity="0.26"/><path d="M1047 534 l-34 20" stroke="#8f8c84" stroke-width="2.6" opacity="0.26"/><path d="M1007 550 l-37 25" stroke="#8f8c84" stroke-width="2.5" opacity="0.26"/><path d="M986 565 l-30 18" stroke="#8f8c84" stroke-width="3.0" opacity="0.26"/><path d="M998 549 l-25 19" stroke="#8f8c84" stroke-width="2.6" opacity="0.26"/><path d="M933 555 l-38 15" stroke="#8f8c84" stroke-width="2.6" opacity="0.26"/><path d="M650 646 C700 610 760 588 812 584 S870 600 880 630" stroke="#f6dfb2" stroke-width="3" fill="none" opacity="0.7"/><path d="M700 690 C760 660 840 648 920 650 S980 640 990 636" stroke="#f8e2b6" stroke-width="3" fill="none" opacity="0.6"/></g>
<polygon points="836.7,590.9 864.6,594.4 892.4,595.8 903.6,588.1 931.4,587.4 959.3,590.9 994.1,595.0 1026.0,598.0 1001.0,627.0 959.3,624.3 917.5,622.9 889.6,620.1 861.8,610.4 840.9,597.9" fill="#c29a79"/>
</g>
</svg>
</body></html>
